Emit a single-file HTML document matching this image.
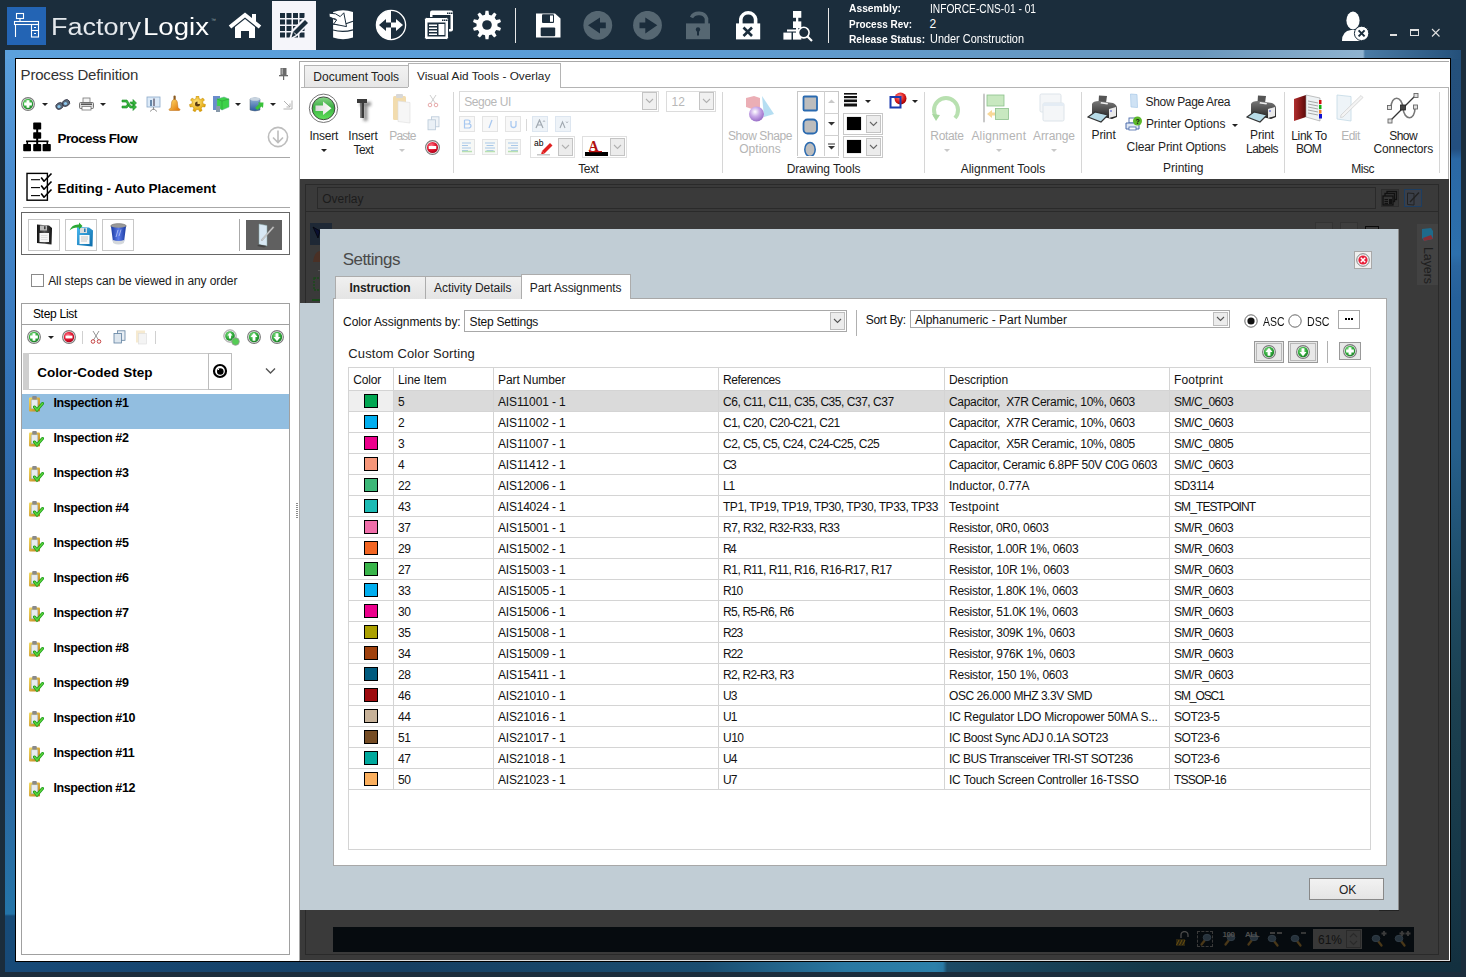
<!DOCTYPE html>
<html><head><meta charset="utf-8"><style>
html,body{margin:0;padding:0;}
body{width:1466px;height:977px;overflow:hidden;position:relative;background:#1b2d3c;font-family:"Liberation Sans",sans-serif;}
body div{position:absolute;box-sizing:border-box;}
.t{line-height:1;white-space:pre;}
</style></head><body>
<div style="left:0px;top:0px;width:1466px;height:50px;background:#1b2d3c"></div><div style="left:5px;top:50px;width:1456px;height:922px;background:linear-gradient(180deg,#5ca1dd 0px,#4a8dd0 120px,#3474b8 330px,#2a62a0 510px,#2a5f98 620px,#2a6aa2 760px,#2474a8 860px,#2474a8 864px,#174b78 866px,#174a78 922px)"></div><div style="left:5px;top:50px;width:1456px;height:9px;background:linear-gradient(90deg,#5ca1dd 0px,#5a9cd6 600px,#6a97bc 1195px,#8fb3d0 1357px,#8fb3d0 1358px,#4a7ba5 1360px,#24507a 1456px)"></div><div style="left:1451px;top:59px;width:10px;height:913px;background:linear-gradient(180deg,#24507a 0px,#234f80 90px,#2a68a5 100px,#2c70ad 195px,#2a66a0 207px,#25609a 240px,#255f8c 390px,#1d4a62 540px,#1b4050 640px,#163848 800px,#13303f 913px)"></div><div style="left:1449px;top:179px;width:1px;height:782px;background:#b0b0b0"></div><div style="left:5px;top:962px;width:1456px;height:10px;background:linear-gradient(90deg,#174a78 0px,#163f62 400px,#1a4d70 700px,#2a78a2 840px,#2c80aa 930px,#2a7aa5 938px,#1c4a65 942px,#153848 1150px,#13303f 1456px)"></div><div style="left:15px;top:58px;width:1436px;height:904px;background:#000"></div><div style="left:16px;top:59px;width:1434px;height:902px;background:#fff"></div><div class="t" style="left:20.6px;top:67.3px;font-size:15px;font-weight:400;color:#333;letter-spacing:-0.188px;">Process Definition</div><div style="left:299px;top:61px;width:1px;height:900px;background:#a8a8a8"></div><div style="left:23px;top:157px;width:267px;height:1px;background:#a8a8a8"></div><div class="t" style="left:57.5px;top:131.57px;font-size:13.5px;font-weight:700;color:#000;letter-spacing:-0.615px;">Process Flow</div><div style="left:23px;top:207px;width:267px;height:1px;background:#a8a8a8"></div><div class="t" style="left:57.3px;top:181.77px;font-size:13.5px;font-weight:700;color:#000;letter-spacing:-0.027px;">Editing - Auto Placement</div><div style="left:21px;top:212px;width:269px;height:43px;border:1px solid #666"></div><div style="left:28px;top:219px;width:32px;height:32px;border:1px solid #c8c8c8"></div><div style="left:65px;top:219px;width:32px;height:32px;border:1px solid #c8c8c8"></div><div style="left:102px;top:219px;width:32px;height:32px;border:1px solid #c8c8c8"></div><div style="left:239px;top:219px;width:1px;height:32px;background:#aaa"></div><div style="left:246px;top:220px;width:36px;height:30px;background:#606060"></div><div style="left:31px;top:274px;width:13px;height:13px;border:1px solid #8a8a8a;background:#fff"></div><div class="t" style="left:48.2px;top:274.54px;font-size:12px;font-weight:400;color:#1a1a1a;letter-spacing:-0.082px;">All steps can be viewed in any order</div><div style="left:21px;top:303px;width:269px;height:652px;border:1px solid #a0a0a0"></div><div style="left:22px;top:324px;width:267px;height:1px;background:#a0a0a0"></div><div class="t" style="left:32.9px;top:308.44px;font-size:12px;font-weight:400;color:#000;letter-spacing:-0.284px;">Step List</div><div style="left:23px;top:353px;width:209px;height:37px;border:1px solid #c8c8c8;background:#fff"></div><div style="left:23px;top:353px;width:6px;height:37px;background:#cfcfcf"></div><div style="left:208px;top:353px;width:24px;height:37px;border:1px solid #bdbdbd"></div><div class="t" style="left:37.2px;top:365.57px;font-size:13.5px;font-weight:700;color:#000;letter-spacing:0.041px;">Color-Coded Step</div><div style="left:22px;top:394px;width:267px;height:35px;background:#92bee0"></div><div class="t" style="left:53.4px;top:397.22px;font-size:12.5px;font-weight:700;color:#000;letter-spacing:-0.366px;">Inspection #1</div><div class="t" style="left:53.4px;top:432.22px;font-size:12.5px;font-weight:700;color:#000;letter-spacing:-0.366px;">Inspection #2</div><div class="t" style="left:53.4px;top:467.22px;font-size:12.5px;font-weight:700;color:#000;letter-spacing:-0.366px;">Inspection #3</div><div class="t" style="left:53.4px;top:502.22px;font-size:12.5px;font-weight:700;color:#000;letter-spacing:-0.366px;">Inspection #4</div><div class="t" style="left:53.4px;top:537.22px;font-size:12.5px;font-weight:700;color:#000;letter-spacing:-0.366px;">Inspection #5</div><div class="t" style="left:53.4px;top:572.22px;font-size:12.5px;font-weight:700;color:#000;letter-spacing:-0.366px;">Inspection #6</div><div class="t" style="left:53.4px;top:607.22px;font-size:12.5px;font-weight:700;color:#000;letter-spacing:-0.366px;">Inspection #7</div><div class="t" style="left:53.4px;top:642.22px;font-size:12.5px;font-weight:700;color:#000;letter-spacing:-0.366px;">Inspection #8</div><div class="t" style="left:53.4px;top:677.22px;font-size:12.5px;font-weight:700;color:#000;letter-spacing:-0.366px;">Inspection #9</div><div class="t" style="left:53.4px;top:712.22px;font-size:12.5px;font-weight:700;color:#000;letter-spacing:-0.367px;">Inspection #10</div><div class="t" style="left:53.4px;top:747.22px;font-size:12.5px;font-weight:700;color:#000;letter-spacing:-0.365px;">Inspection #11</div><div class="t" style="left:53.4px;top:782.22px;font-size:12.5px;font-weight:700;color:#000;letter-spacing:-0.367px;">Inspection #12</div><div style="left:299px;top:61px;width:1150px;height:1px;background:#a8a8a8"></div><div style="left:299px;top:61px;width:1px;height:118px;background:#a8a8a8"></div><div style="left:304px;top:65px;width:105px;height:23px;background:linear-gradient(#f2f2f2,#e6e6e6);border:1px solid #b4b4b4;border-bottom:none"></div><div class="t" style="left:313.3px;top:70.54px;font-size:12px;font-weight:400;color:#222;">Document Tools</div><div style="left:408px;top:63px;width:153px;height:25px;background:#fff;border:1px solid #b4b4b4;border-bottom:none"></div><div class="t" style="left:417px;top:70.71px;font-size:11.8px;font-weight:400;color:#222;">Visual Aid Tools - Overlay</div><div style="left:301px;top:87px;width:1148px;height:1px;background:#b4b4b4"></div><div style="left:408px;top:87px;width:152px;height:1px;background:#fff"></div><div style="left:1448px;top:87px;width:1px;height:92px;background:#b4b4b4"></div><div style="left:300px;top:179px;width:1149px;height:782px;background:#3a3a3a"></div><div style="left:305px;top:184px;width:1134px;height:771px;border:1px solid #2a2a2a"></div><div style="left:317px;top:187px;width:1059px;height:22px;border:1px solid #2a2a2a"></div><div class="t" style="left:322.2px;top:192.64px;font-size:12px;font-weight:400;color:#1c1c1c;">Overlay</div><div style="left:306px;top:211px;width:1132px;height:1px;background:#2a2a2a"></div><div style="left:300px;top:960px;width:1150px;height:1px;background:#ddd"></div><div style="left:333px;top:927px;width:1081px;height:25px;background:#060b0f"></div><div style="left:7px;top:7px;width:39px;height:38px;background:#2364b4"></div><svg style="position:absolute;left:7px;top:7px" width="39" height="38" viewBox="0 0 39 38"><g fill="none" stroke="#fff" stroke-width="1.1">
<rect x="9.5" y="6.5" width="7" height="5"/><line x1="13" y1="11.5" x2="13" y2="14"/>
<rect x="7.5" y="14.5" width="24" height="3"/>
<line x1="8.5" y1="17.5" x2="8.5" y2="30"/><rect x="24.5" y="17.5" width="7" height="12.5"/>
<line x1="24.5" y1="23.5" x2="31.5" y2="23.5"/><line x1="27" y1="20.5" x2="29" y2="20.5"/><line x1="27" y1="26.5" x2="29" y2="26.5"/></g></svg><div class="t" style="left:50.5px;top:15.73px;font-size:23px;font-weight:400;color:#e4e8ec;transform-origin:0 0;transform:scaleX(1.1736);">Factory</div><div class="t" style="left:143px;top:15.73px;font-size:23px;font-weight:400;color:#ffffff;transform-origin:0 0;transform:scaleX(1.2000);">Logix</div><div class="t" style="left:211px;top:17.77px;font-size:5px;font-weight:400;color:#9aa;">™</div><svg style="position:absolute;left:228px;top:12px" width="34" height="28" viewBox="0 0 34 28"><path d="M2 15 L17 3 L32 15" fill="none" stroke="#fff" stroke-width="4" stroke-linejoin="miter"/>
<rect x="24" y="2" width="4" height="8" fill="#fff"/>
<path d="M7 15 L17 7 L27 15 L27 26 L21 26 L21 19 L13 19 L13 26 L7 26 Z" fill="#fff"/></svg><div style="left:272px;top:1px;width:44px;height:49px;background:#f5f5fa"></div><svg style="position:absolute;left:279px;top:12px" width="30" height="27" viewBox="0 0 30 27"><rect x="1.0" y="1.0" width="5" height="5" fill="#1b2d3c"/><rect x="7.5" y="1.0" width="5" height="5" fill="#1b2d3c"/><rect x="14.0" y="1.0" width="5" height="5" fill="#1b2d3c"/><rect x="20.5" y="1.0" width="5" height="5" fill="#1b2d3c"/><rect x="1.0" y="7.5" width="5" height="5" fill="#1b2d3c"/><rect x="7.5" y="7.5" width="5" height="5" fill="#1b2d3c"/><rect x="14.0" y="7.5" width="5" height="5" fill="#1b2d3c"/><rect x="20.5" y="7.5" width="5" height="5" fill="#1b2d3c"/><rect x="1.0" y="14.0" width="5" height="5" fill="#1b2d3c"/><rect x="7.5" y="14.0" width="5" height="5" fill="#1b2d3c"/><rect x="14.0" y="14.0" width="5" height="5" fill="#1b2d3c"/><rect x="20.5" y="14.0" width="5" height="5" fill="#1b2d3c"/><rect x="1.0" y="20.5" width="5" height="5" fill="#1b2d3c"/><rect x="7.5" y="20.5" width="5" height="5" fill="#1b2d3c"/><rect x="14.0" y="20.5" width="5" height="5" fill="#1b2d3c"/><rect x="20.5" y="20.5" width="5" height="5" fill="#1b2d3c"/><path d="M12 26 L14 19 L26 7 L29.5 10.5 L17.5 22.5 Z" fill="#f5f5fa" stroke="#f5f5fa" stroke-width="3"/>
<path d="M12.5 25.5 L14 20 L26 8 L29 11 L17 23 Z" fill="#1b2d3c"/><path d="M15 20.5 L17.5 23" stroke="#f5f5fa" stroke-width="1"/></svg><svg style="position:absolute;left:325px;top:6px" width="33" height="36" viewBox="0 0 33 36"><path d="M8.1 6 Q18 2.5 28 6 L28 31.5 Q18 35 8.1 31.5 Z" fill="#fff"/>
<path d="M8 18.3 Q18 20 28 15.3" fill="none" stroke="#1b2d3c" stroke-width="1.1"/>
<path d="M8 24 Q18 27 28 23.8" fill="none" stroke="#1b2d3c" stroke-width="1.3"/>
<path d="M4 7.2 L10.5 7.8 L15.2 10.6 L18.8 6.8 L21.5 20.6 L8.6 18 L11.5 14.2 L8.5 12.8 L4.2 10.8 Z" fill="#fff" stroke="#1b2d3c" stroke-width="1" stroke-linejoin="miter"/>
<path d="M8.2 12.5 Q10.5 12.5 11.8 14" fill="none" stroke="#1b2d3c" stroke-width="0.9"/></svg><svg style="position:absolute;left:375px;top:9px" width="32" height="32" viewBox="0 0 32 32"><circle cx="16" cy="16" r="14.6" fill="#1b2d3c" stroke="#fff" stroke-width="1.3"/>
<path d="M16 1.4 A14.6 14.6 0 0 0 16 30.6 Z" fill="#fff"/>
<path d="M4 16 L11 10 L11 13.5 L16 13.5 L16 18.5 L11 18.5 L11 22 Z" fill="#1b2d3c"/>
<path d="M28 16 L21 10 L21 13.5 L16 13.5 L16 18.5 L21 18.5 L21 22 Z" fill="#fff"/></svg><svg style="position:absolute;left:423px;top:9px" width="33" height="32" viewBox="0 0 33 32"><rect x="7" y="1.5" width="23" height="21" rx="2" fill="#fff"/>
<rect x="9.5" y="6" width="18" height="14" fill="#1b2d3c"/>
<rect x="1.5" y="8.5" width="24" height="22" rx="2" fill="#fff" stroke="#1b2d3c" stroke-width="1"/>
<rect x="4.5" y="13.5" width="18" height="14" fill="#1b2d3c"/>
<g fill="#fff"><rect x="6" y="15.5" width="8" height="1.5"/><rect x="6" y="18.5" width="8" height="1.5"/><rect x="6" y="21.5" width="8" height="1.5"/><rect x="6" y="24.5" width="8" height="1.5"/><rect x="15.5" y="15" width="6" height="11"/></g>
<g fill="#1b2d3c"><rect x="19" y="10.5" width="1.5" height="1.5"/><rect x="21" y="10.5" width="1.5" height="1.5"/><rect x="23" y="10.5" width="1.5" height="1.5"/>
<rect x="24" y="3.5" width="1.5" height="1.5"/><rect x="26" y="3.5" width="1.5" height="1.5"/><rect x="28" y="3.5" width="1.5" height="1.5"/></g></svg><svg style="position:absolute;left:472px;top:10px" width="30" height="30" viewBox="0 0 30 30"><polygon points="13.00,4.69 13.51,0.78 16.49,0.78 17.00,4.69 19.44,5.48 22.15,2.62 24.57,4.37 22.68,7.84 24.18,9.91 28.06,9.18 28.99,12.03 25.42,13.72 25.42,16.28 28.99,17.97 28.06,20.82 24.18,20.09 22.68,22.16 24.57,25.63 22.15,27.38 19.44,24.52 17.00,25.31 16.49,29.22 13.51,29.22 13.00,25.31 10.56,24.52 7.85,27.38 5.43,25.63 7.32,22.16 5.82,20.09 1.94,20.82 1.01,17.97 4.58,16.28 4.58,13.72 1.01,12.03 1.94,9.18 5.82,9.91 7.32,7.84 5.43,4.37 7.85,2.62 10.56,5.48" fill="#fff"/><circle cx="15" cy="15" r="4.8" fill="#1b2d3c"/></svg><div style="left:515px;top:8px;width:1px;height:35px;background:#e8e8e8"></div><svg style="position:absolute;left:535px;top:13px" width="26" height="25" viewBox="0 0 26 25"><path d="M1 0.5 L20 0.5 L25.5 5.5 L25.5 24.5 L1 24.5 Z" fill="#fff"/>
<rect x="7" y="1.3" width="12" height="8.8" rx="1" fill="#1b2d3c"/><rect x="15" y="2.5" width="3" height="6.3" fill="#fff"/>
<rect x="5.7" y="14.4" width="14.5" height="8.9" rx="1" fill="#1b2d3c"/></svg><svg style="position:absolute;left:583px;top:11px" width="30" height="30" viewBox="0 0 30 30"><circle cx="14.8" cy="14.3" r="14.4" fill="#566772"/>
<path d="M5 14.3 L17 6.6 L17 11.5 L22.8 11.5 L22.8 17.3 L17 17.3 L17 22.5 Z" fill="#1b2d3c"/></svg><svg style="position:absolute;left:633px;top:11px" width="30" height="30" viewBox="0 0 30 30"><circle cx="14.5" cy="14.3" r="14.4" fill="#566772"/>
<path d="M24.3 14.3 L12.3 6.6 L12.3 11.5 L6.5 11.5 L6.5 17.3 L12.3 17.3 L12.3 22.5 Z" fill="#1b2d3c"/></svg><svg style="position:absolute;left:685px;top:10px" width="27" height="31" viewBox="0 0 27 31"><path d="M6.5 7.5 A8 7 0 0 1 21.5 8.5 L21.5 14" fill="none" stroke="#566772" stroke-width="3.6"/>
<rect x="1" y="13.4" width="24" height="15.8" fill="#566772"/>
<circle cx="13" cy="19.5" r="2.2" fill="#1b2d3c"/><rect x="12" y="20" width="2" height="5.5" fill="#1b2d3c"/></svg><svg style="position:absolute;left:735px;top:10px" width="27" height="31" viewBox="0 0 27 31"><path d="M5.8 14 L5.8 9 A7.5 7.5 0 0 1 20.6 9 L20.6 14" fill="none" stroke="#fff" stroke-width="3.6"/>
<rect x="1" y="13.4" width="24.2" height="16" fill="#fff"/>
<path d="M8.5 17.5 L17 26 M17 17.5 L8.5 26" stroke="#1b2d3c" stroke-width="2.6"/></svg><svg style="position:absolute;left:782px;top:10px" width="32" height="32" viewBox="0 0 32 32"><g fill="#fff"><rect x="11" y="1" width="8.3" height="6.8"/><rect x="11" y="11.4" width="8.3" height="6.6"/><rect x="14" y="7" width="2.3" height="5"/>
<rect x="1.4" y="22.6" width="8.1" height="7"/><rect x="11" y="22.6" width="8.3" height="7"/><rect x="14" y="17.5" width="2.3" height="6"/><rect x="5" y="19.5" width="12" height="2"/></g>
<circle cx="21.8" cy="22.6" r="5.3" fill="#1b2d3c" stroke="#fff" stroke-width="1.6"/><line x1="25.5" y1="26.5" x2="30" y2="31" stroke="#fff" stroke-width="2.2"/></svg><div style="left:828px;top:8px;width:1px;height:35px;background:#e8e8e8"></div><div class="t" style="left:849.3px;top:3.27px;font-size:11.5px;font-weight:700;color:#fff;transform-origin:0 0;transform:scaleX(0.8944);">Assembly:</div><div class="t" style="left:849.3px;top:18.87px;font-size:11.5px;font-weight:700;color:#fff;transform-origin:0 0;transform:scaleX(0.8649);">Process Rev:</div><div class="t" style="left:849.3px;top:33.87px;font-size:11.5px;font-weight:700;color:#fff;transform-origin:0 0;transform:scaleX(0.8878);">Release Status:</div><div class="t" style="left:929.6px;top:2.84px;font-size:12px;font-weight:400;color:#fff;transform-origin:0 0;transform:scaleX(0.8501);">INFORCE-CNS-01 - 01</div><div class="t" style="left:929.6px;top:18.44px;font-size:12px;font-weight:400;color:#fff;">2</div><div class="t" style="left:929.6px;top:33.44px;font-size:12px;font-weight:400;color:#fff;transform-origin:0 0;transform:scaleX(0.9093);">Under Construction</div><svg style="position:absolute;left:1340px;top:11px" width="32" height="32" viewBox="0 0 32 32"><ellipse cx="13" cy="9.5" rx="6.6" ry="9" fill="#fff"/>
<path d="M2 30 Q2 20 11 19 L15 19 Q21 20 22 26 L22 30 Z" fill="#fff"/>
<circle cx="21.6" cy="22.4" r="7.2" fill="#fff" stroke="#1b2d3c" stroke-width="1"/>
<path d="M18.6 19.4 L24.6 25.4 M24.6 19.4 L18.6 25.4" stroke="#1b2d3c" stroke-width="2"/></svg><div style="left:1390px;top:34px;width:7px;height:2px;background:#e0e0e0"></div><div style="left:1410px;top:29px;width:9px;height:7px;border:1px solid #e0e0e0;border-top:2px solid #e0e0e0"></div><svg style="position:absolute;left:1431px;top:28px" width="10" height="10" viewBox="0 0 10 10"><path d="M1 1 L8.5 8.5 M8.5 1 L1 8.5" stroke="#e0e0e0" stroke-width="1.1"/></svg><svg style="position:absolute;left:278px;top:67px" width="12" height="14" viewBox="0 0 12 14"><rect x="2.5" y="1" width="6" height="7" fill="#6a6a6a"/><rect x="3.5" y="1.5" width="1.5" height="6" fill="#a8a8a8"/><rect x="1" y="8" width="9" height="1.3" fill="#6a6a6a"/><rect x="5" y="9" width="1.2" height="4" fill="#6a6a6a"/></svg><svg style="position:absolute;left:21px;top:97px" width="14" height="14" viewBox="0 0 14 14"><defs>
<radialGradient id="gg" cx="40%" cy="35%" r="70%"><stop offset="0" stop-color="#8be08b"/><stop offset="0.6" stop-color="#2faa3a"/><stop offset="1" stop-color="#1a7a25"/></radialGradient>
<radialGradient id="rg" cx="40%" cy="35%" r="70%"><stop offset="0" stop-color="#ff8090"/><stop offset="0.6" stop-color="#e0102a"/><stop offset="1" stop-color="#a00018"/></radialGradient>
<linearGradient id="tan" x1="0" y1="0" x2="1" y2="1"><stop offset="0" stop-color="#f8e070"/><stop offset="1" stop-color="#b87818"/></linearGradient>
</defs><circle cx="7.0" cy="7.0" r="6.4" fill="#f4f4f4" stroke="#7a7a7a" stroke-width="1.1"/><circle cx="7.0" cy="7.0" r="5.18" fill="url(#gg)"/><path d="M7.0 3.15 V10.85 M3.15 7.0 H10.85" stroke="#fff" stroke-width="2.80"/></svg><svg style="position:absolute;left:42px;top:103px" width="6" height="3" viewBox="0 0 6 3"><path d="M0 0 H6 L3.0 3 Z" fill="#222"/></svg><svg style="position:absolute;left:55px;top:97px" width="16" height="13" viewBox="0 0 16 13"><g fill="#5a6a7a" stroke="#334" stroke-width="0.8"><ellipse cx="4.5" cy="9" rx="3.8" ry="3.2" transform="rotate(-30 4.5 9)"/><ellipse cx="11" cy="6" rx="3.8" ry="3.2" transform="rotate(-30 11 6)"/></g><g fill="#8cc8f0"><circle cx="4" cy="9.5" r="1.6"/><circle cx="10.5" cy="6.5" r="1.6"/></g></svg><svg style="position:absolute;left:79px;top:97px" width="15" height="14" viewBox="0 0 15 14"><rect x="4" y="1" width="7" height="5" fill="#f4f4f4" stroke="#777" stroke-width="0.8"/><rect x="0.5" y="5.5" width="14" height="6" rx="1" fill="#ddd" stroke="#666" stroke-width="0.9"/><rect x="3" y="9.5" width="9" height="3.5" fill="#fff" stroke="#777" stroke-width="0.8"/><rect x="2" y="6.5" width="11" height="1.5" fill="#555"/></svg><svg style="position:absolute;left:100px;top:103px" width="6" height="3" viewBox="0 0 6 3"><path d="M0 0 H6 L3.0 3 Z" fill="#222"/></svg><svg style="position:absolute;left:121px;top:97px" width="16" height="14" viewBox="0 0 16 14"><path d="M1 3 H6 L10 9 H12 V6.5 L15.5 10 L12 13.5 V11 H9 L5 5 H1 Z M1 9 H5 L6.5 7 L7.7 9 L6 11 H1 Z M9 5 H12 V2.5 L15.5 6 L12 9.5 V7 H10 Z" fill="#36b63e" stroke="#1a8a22" stroke-width="0.6"/></svg><svg style="position:absolute;left:146px;top:96px" width="15" height="16" viewBox="0 0 15 16"><rect x="1" y="1" width="13" height="10" fill="#dceaf8" stroke="#8aa8c8" stroke-width="0.8"/><rect x="4" y="4" width="2" height="6" fill="#6688aa"/><rect x="7" y="2.5" width="2" height="7.5" fill="#889"/><path d="M7.5 11 V14 M7.5 12.5 L4 15.5 M7.5 12.5 L11 15.5" stroke="#888" stroke-width="0.9"/></svg><svg style="position:absolute;left:168px;top:95px" width="13" height="17" viewBox="0 0 13 17"><defs><linearGradient id="bell" x1="0" y1="0" x2="1" y2="1"><stop offset="0" stop-color="#ffe070"/><stop offset="1" stop-color="#e07000"/></linearGradient></defs><rect x="5.5" y="0.5" width="2.2" height="5" rx="1.1" fill="#8a5a20"/><path d="M6.5 4.5 Q3.5 4.5 3.5 9 L3 12.5 L1 14.5 Q1 15.5 2 15.5 H11 Q12 15.5 12 14.5 L10 12.5 L9.5 9 Q9.5 4.5 6.5 4.5 Z" fill="url(#bell)" stroke="#b86a10" stroke-width="0.5"/></svg><svg style="position:absolute;left:189px;top:96px" width="17" height="16" viewBox="0 0 17 16"><defs><radialGradient id="yg" cx="45%" cy="40%" r="60%"><stop offset="0" stop-color="#ffe680"/><stop offset="1" stop-color="#e0a000"/></radialGradient></defs><polygon points="6.96,2.62 7.25,0.10 9.75,0.10 10.04,2.62 11.75,3.44 13.90,2.10 15.46,4.05 13.67,5.85 14.09,7.69 16.48,8.54 15.92,10.98 13.40,10.70 12.23,12.18 13.06,14.58 10.80,15.66 9.44,13.52 7.56,13.52 6.20,15.66 3.94,14.58 4.77,12.18 3.60,10.70 1.08,10.98 0.52,8.54 2.91,7.69 3.33,5.85 1.54,4.05 3.10,2.10 5.25,3.44" fill="url(#yg)" stroke="#c08800" stroke-width="0.5"/><path d="M8.5 5.5 A2.5 2.5 0 1 0 11 8 L8.5 8 Z" fill="#5a3a10"/></svg><svg style="position:absolute;left:212px;top:95px" width="18" height="18" viewBox="0 0 18 18"><rect x="1" y="1" width="7" height="14" fill="#6a8ccc"/><path d="M5 4 L12 2 L17 4 V12 L10 15 L5 12 Z" fill="#3cd24a" stroke="#6a9" stroke-width="0.5"/><path d="M5 4 L10 6 L17 4 M10 6 V15" stroke="#2a9a34" stroke-width="0.6" fill="none"/><rect x="4" y="11" width="4" height="6" fill="#8899aa"/></svg><svg style="position:absolute;left:235px;top:103px" width="6" height="3" viewBox="0 0 6 3"><path d="M0 0 H6 L3.0 3 Z" fill="#222"/></svg><svg style="position:absolute;left:249px;top:96px" width="16" height="16" viewBox="0 0 16 16"><defs><linearGradient id="db" x1="0" y1="0" x2="0" y2="1"><stop offset="0" stop-color="#9ab8d8"/><stop offset="1" stop-color="#2a5aa0"/></linearGradient></defs><path d="M1 3 Q6 0.5 11 3 V14 Q6 16 1 14 Z" fill="url(#db)" stroke="#567" stroke-width="0.5"/><ellipse cx="6" cy="3" rx="5" ry="1.8" fill="#c8d4e0"/><path d="M6 12 L10 8 L9 6.5 L14.5 6.5 L14 12 L12.5 10.5 L8.5 14 Z" fill="#3ac23a"/></svg><svg style="position:absolute;left:270px;top:103px" width="6" height="3" viewBox="0 0 6 3"><path d="M0 0 H6 L3.0 3 Z" fill="#222"/></svg><svg style="position:absolute;left:282px;top:99px" width="11" height="11" viewBox="0 0 11 11"><path d="M1.5 10 H10 V1.5" fill="none" stroke="#aaa" stroke-width="0.9"/><path d="M2 2 L8 8 M8 4.5 V8 H4.5" fill="none" stroke="#aaa" stroke-width="0.9"/></svg><svg style="position:absolute;left:22px;top:121px" width="30" height="32" viewBox="0 0 30 32"><g fill="#000"><rect x="11.2" y="1.6" width="8" height="7" rx="0.8"/><rect x="11.2" y="11.2" width="8" height="6.6" rx="0.8"/><rect x="14.2" y="8" width="2" height="4"/><rect x="14.2" y="17" width="2" height="6"/><rect x="4" y="19.5" width="22.5" height="1.6"/><rect x="4.5" y="20" width="1.6" height="4"/><rect x="24.5" y="20" width="1.6" height="4"/><rect x="1.2" y="23" width="7.8" height="7.3" rx="0.8"/><rect x="11.2" y="23" width="8" height="7.3" rx="0.8"/><rect x="20.6" y="23" width="8.2" height="7.3" rx="0.8"/></g></svg><svg style="position:absolute;left:267px;top:126px" width="22" height="22" viewBox="0 0 22 22"><circle cx="11" cy="11" r="9.6" fill="none" stroke="#bdbdbd" stroke-width="1.6"/><path d="M11 4.5 V16.5 M6 11.5 L11 16.5 L16 11.5" fill="none" stroke="#bdbdbd" stroke-width="1.6"/></svg><svg style="position:absolute;left:22px;top:168px" width="34" height="38" viewBox="0 0 34 38"><rect x="5" y="5.4" width="20.4" height="26.8" fill="#fff" stroke="#000" stroke-width="1.4"/><g stroke="#000" stroke-width="1.1"><path d="M9 11.7 H18"/><path d="M9 19.6 H18"/><path d="M9 27.6 H18"/></g><g fill="none" stroke="#000" stroke-linejoin="round"><path d="M19.2 9.5 L22 13.2 L29.5 5.5" stroke-width="1.6"/><path d="M19.2 17.5 L22 21.2 L29.5 13.5" stroke-width="1.6"/><path d="M19.2 25.5 L22 29.2 L29.5 21.5" stroke-width="1.6"/></g></svg><svg style="position:absolute;left:35px;top:223px" width="18" height="23" viewBox="0 0 18 23"><defs><linearGradient id="fl" x1="0" y1="0" x2="1" y2="0"><stop offset="0" stop-color="#111"/><stop offset="0.5" stop-color="#555"/><stop offset="1" stop-color="#111"/></linearGradient></defs><path d="M2 1.5 L14 2.5 L17 5 L16.5 21.5 L2 20 Z" fill="url(#fl)"/><rect x="5" y="2.5" width="7" height="5" fill="#bbb"/><rect x="9" y="3.2" width="1.6" height="3" fill="#444"/><rect x="4.5" y="10" width="9.5" height="9" fill="#f4f4f4"/><path d="M6 12.5 H12.5 M6 14.5 H12.5 M6 16.5 H12.5" stroke="#ccc" stroke-width="0.6"/></svg><svg style="position:absolute;left:68px;top:222px" width="27" height="26" viewBox="0 0 27 26"><defs><linearGradient id="fb" x1="0" y1="0" x2="1" y2="1"><stop offset="0" stop-color="#4ab8f0"/><stop offset="1" stop-color="#0a6aa8"/></linearGradient></defs><path d="M9 5 L21 5.5 L25 8.5 L24.5 24.5 L9 23 Z" fill="url(#fb)"/><rect x="12" y="6" width="7" height="5" fill="#ddd"/><rect x="16" y="6.5" width="1.6" height="3.5" fill="#2a7ab0"/><rect x="11.5" y="13" width="10" height="9" fill="#fafafa"/><path d="M13 15 H20 M13 17 H20 M13 19 H19" stroke="#aaa" stroke-width="0.6"/><path d="M1.5 8.5 Q4 2 11 2.5 L11 0.5 L14.5 4 L11 7.5 L11 5.5 Q5 5 1.5 8.5 Z" fill="#2aa834"/></svg><svg style="position:absolute;left:110px;top:223px" width="17" height="23" viewBox="0 0 17 23"><defs><linearGradient id="tr" x1="0" y1="0" x2="1" y2="0"><stop offset="0" stop-color="#1a3aa0"/><stop offset="0.5" stop-color="#5a7ae8"/><stop offset="1" stop-color="#1a3aa0"/></linearGradient></defs><ellipse cx="8.5" cy="3" rx="7.8" ry="2.4" fill="#999" stroke="#777" stroke-width="0.6"/><path d="M1 3.5 L3 19 Q8.5 22 14 19 L16 3.5 Q8.5 6 1 3.5 Z" fill="url(#tr)"/><path d="M3 17 Q8.5 19 14 17 L14 20 Q8.5 23 3 20 Z" fill="#d4d8dc"/><path d="M8 7 L6 14 M11 6.5 L9 13" stroke="#b8c8f8" stroke-width="0.8"/></svg><svg style="position:absolute;left:247px;top:221px" width="34" height="28" viewBox="0 0 34 28"><path d="M12 3 L20 4.5 L20 25 L12 23.5 Z" fill="#d8e8f4" stroke="#8aa" stroke-width="0.5"/><path d="M12 23.5 L20 25 L17 26.5 L10 25 Z" fill="#444"/><path d="M14 19 L26 5.5 L27 6.5 L15 20 Z" fill="#ccc" stroke="#999" stroke-width="0.4"/></svg><svg style="position:absolute;left:27px;top:330px" width="14" height="14" viewBox="0 0 14 14"><defs>
<radialGradient id="gg" cx="40%" cy="35%" r="70%"><stop offset="0" stop-color="#8be08b"/><stop offset="0.6" stop-color="#2faa3a"/><stop offset="1" stop-color="#1a7a25"/></radialGradient>
<radialGradient id="rg" cx="40%" cy="35%" r="70%"><stop offset="0" stop-color="#ff8090"/><stop offset="0.6" stop-color="#e0102a"/><stop offset="1" stop-color="#a00018"/></radialGradient>
<linearGradient id="tan" x1="0" y1="0" x2="1" y2="1"><stop offset="0" stop-color="#f8e070"/><stop offset="1" stop-color="#b87818"/></linearGradient>
</defs><circle cx="7.0" cy="7.0" r="6.4" fill="#f4f4f4" stroke="#7a7a7a" stroke-width="1.1"/><circle cx="7.0" cy="7.0" r="5.18" fill="url(#gg)"/><path d="M7.0 3.15 V10.85 M3.15 7.0 H10.85" stroke="#fff" stroke-width="2.80"/></svg><svg style="position:absolute;left:48px;top:336px" width="6" height="3" viewBox="0 0 6 3"><path d="M0 0 H6 L3.0 3 Z" fill="#222"/></svg><svg style="position:absolute;left:62px;top:330px" width="14" height="14" viewBox="0 0 14 14"><defs>
<radialGradient id="gg" cx="40%" cy="35%" r="70%"><stop offset="0" stop-color="#8be08b"/><stop offset="0.6" stop-color="#2faa3a"/><stop offset="1" stop-color="#1a7a25"/></radialGradient>
<radialGradient id="rg" cx="40%" cy="35%" r="70%"><stop offset="0" stop-color="#ff8090"/><stop offset="0.6" stop-color="#e0102a"/><stop offset="1" stop-color="#a00018"/></radialGradient>
<linearGradient id="tan" x1="0" y1="0" x2="1" y2="1"><stop offset="0" stop-color="#f8e070"/><stop offset="1" stop-color="#b87818"/></linearGradient>
</defs><circle cx="7.0" cy="7.0" r="6.4" fill="#f4f4f4" stroke="#7a7a7a" stroke-width="1.1"/><circle cx="7.0" cy="7.0" r="5.18" fill="url(#rg)"/><path d="M3.5 7.0 H10.5" stroke="#fff" stroke-width="2.80"/></svg><div style="left:82px;top:331px;width:1px;height:13px;background:#d0d0d0"></div><svg style="position:absolute;left:90px;top:330px" width="12" height="14" viewBox="0 0 12 14"><path d="M3 1 L8.5 10 M9 1 L3.5 10" stroke="#888" stroke-width="0.9"/><circle cx="3" cy="11.5" r="1.8" fill="none" stroke="#c03030" stroke-width="0.9"/><circle cx="9" cy="11.5" r="1.8" fill="none" stroke="#c03030" stroke-width="0.9"/></svg><svg style="position:absolute;left:113px;top:330px" width="13" height="14" viewBox="0 0 13 14"><rect x="4.5" y="0.8" width="7.5" height="9.5" fill="#e8eef4" stroke="#6080a0" stroke-width="0.8"/><rect x="1" y="3.5" width="7.5" height="9.5" fill="#dde6ee" stroke="#6080a0" stroke-width="0.8"/></svg><svg style="position:absolute;left:135px;top:329px" width="13" height="16" viewBox="0 0 13 16"><rect x="1" y="1.5" width="9" height="12" fill="#f0dcb0" opacity="0.6"/><rect x="3.5" y="4.5" width="8" height="10.5" fill="#f4f4f4" stroke="#ddd" stroke-width="0.6"/></svg><div style="left:155px;top:331px;width:1px;height:13px;background:#d0d0d0"></div><svg style="position:absolute;left:223px;top:329px" width="17" height="17" viewBox="0 0 17 17"><defs>
<radialGradient id="gg" cx="40%" cy="35%" r="70%"><stop offset="0" stop-color="#8be08b"/><stop offset="0.6" stop-color="#2faa3a"/><stop offset="1" stop-color="#1a7a25"/></radialGradient>
<radialGradient id="rg" cx="40%" cy="35%" r="70%"><stop offset="0" stop-color="#ff8090"/><stop offset="0.6" stop-color="#e0102a"/><stop offset="1" stop-color="#a00018"/></radialGradient>
<linearGradient id="tan" x1="0" y1="0" x2="1" y2="1"><stop offset="0" stop-color="#f8e070"/><stop offset="1" stop-color="#b87818"/></linearGradient>
</defs><circle cx="7" cy="7" r="6.2" fill="#eee" stroke="#888" stroke-width="0.8"/><circle cx="7" cy="7" r="4.8" fill="url(#gg)"/><path d="M7 3.5 L9.5 6.5 H8 V9.5 H6 V6.5 H4.5 Z" fill="#fff"/><circle cx="12.5" cy="12.5" r="3.8" fill="#5c5" stroke="#999" stroke-width="0.8"/></svg><svg style="position:absolute;left:247px;top:330px" width="14" height="14" viewBox="0 0 14 14"><defs>
<radialGradient id="gg" cx="40%" cy="35%" r="70%"><stop offset="0" stop-color="#8be08b"/><stop offset="0.6" stop-color="#2faa3a"/><stop offset="1" stop-color="#1a7a25"/></radialGradient>
<radialGradient id="rg" cx="40%" cy="35%" r="70%"><stop offset="0" stop-color="#ff8090"/><stop offset="0.6" stop-color="#e0102a"/><stop offset="1" stop-color="#a00018"/></radialGradient>
<linearGradient id="tan" x1="0" y1="0" x2="1" y2="1"><stop offset="0" stop-color="#f8e070"/><stop offset="1" stop-color="#b87818"/></linearGradient>
</defs><circle cx="7.0" cy="7.0" r="6.4" fill="#f4f4f4" stroke="#7a7a7a" stroke-width="1.1"/><circle cx="7.0" cy="7.0" r="5.18" fill="url(#gg)"/><path d="M7.0 2.8000000000000003 L10.5 7.0 H8.4 V10.85 H5.6000000000000005 V7.0 H3.5 Z" fill="#fff"/></svg><svg style="position:absolute;left:270px;top:330px" width="14" height="14" viewBox="0 0 14 14"><defs>
<radialGradient id="gg" cx="40%" cy="35%" r="70%"><stop offset="0" stop-color="#8be08b"/><stop offset="0.6" stop-color="#2faa3a"/><stop offset="1" stop-color="#1a7a25"/></radialGradient>
<radialGradient id="rg" cx="40%" cy="35%" r="70%"><stop offset="0" stop-color="#ff8090"/><stop offset="0.6" stop-color="#e0102a"/><stop offset="1" stop-color="#a00018"/></radialGradient>
<linearGradient id="tan" x1="0" y1="0" x2="1" y2="1"><stop offset="0" stop-color="#f8e070"/><stop offset="1" stop-color="#b87818"/></linearGradient>
</defs><circle cx="7.0" cy="7.0" r="6.4" fill="#f4f4f4" stroke="#7a7a7a" stroke-width="1.1"/><circle cx="7.0" cy="7.0" r="5.18" fill="url(#gg)"/><path d="M7.0 11.200000000000001 L10.5 7.0 H8.4 V3.15 H5.6000000000000005 V7.0 H3.5 Z" fill="#fff"/></svg><svg style="position:absolute;left:212px;top:363px" width="16" height="16" viewBox="0 0 16 16"><circle cx="8" cy="8" r="6" fill="none" stroke="#000" stroke-width="2.2"/><circle cx="8.3" cy="8.5" r="3.3" fill="#000"/><path d="M5 5 L7 7" stroke="#fff" stroke-width="1"/></svg><svg style="position:absolute;left:265px;top:367px" width="11" height="8" viewBox="0 0 11 8"><path d="M1 1.5 L5.5 6 L10 1.5" fill="none" stroke="#555" stroke-width="1.4"/></svg><svg style="position:absolute;left:28px;top:396px" width="16" height="17" viewBox="0 0 16 17"><defs><linearGradient id="tn0" x1="0" y1="0" x2="1" y2="1"><stop offset="0" stop-color="#f6dc60"/><stop offset="1" stop-color="#b87818"/></linearGradient></defs>
<rect x="1" y="1.5" width="11" height="14" rx="1" fill="url(#tn0)"/><rect x="3.2" y="3.8" width="6.6" height="9" fill="#e8ecf0" stroke="#9aa" stroke-width="0.5"/><rect x="4.2" y="0" width="4.6" height="3.5" rx="1" fill="#8a8a8a"/>
<path d="M6.5 11 L9 14 L14.5 7.5" fill="none" stroke="#1a9a1a" stroke-width="3" stroke-linecap="round"/><path d="M6.5 11 L9 14 L14.5 7.5" fill="none" stroke="#5ad43a" stroke-width="1.5" stroke-linecap="round"/></svg><svg style="position:absolute;left:28px;top:431px" width="16" height="17" viewBox="0 0 16 17"><defs><linearGradient id="tn1" x1="0" y1="0" x2="1" y2="1"><stop offset="0" stop-color="#f6dc60"/><stop offset="1" stop-color="#b87818"/></linearGradient></defs>
<rect x="1" y="1.5" width="11" height="14" rx="1" fill="url(#tn1)"/><rect x="3.2" y="3.8" width="6.6" height="9" fill="#e8ecf0" stroke="#9aa" stroke-width="0.5"/><rect x="4.2" y="0" width="4.6" height="3.5" rx="1" fill="#8a8a8a"/>
<path d="M6.5 11 L9 14 L14.5 7.5" fill="none" stroke="#1a9a1a" stroke-width="3" stroke-linecap="round"/><path d="M6.5 11 L9 14 L14.5 7.5" fill="none" stroke="#5ad43a" stroke-width="1.5" stroke-linecap="round"/></svg><svg style="position:absolute;left:28px;top:466px" width="16" height="17" viewBox="0 0 16 17"><defs><linearGradient id="tn2" x1="0" y1="0" x2="1" y2="1"><stop offset="0" stop-color="#f6dc60"/><stop offset="1" stop-color="#b87818"/></linearGradient></defs>
<rect x="1" y="1.5" width="11" height="14" rx="1" fill="url(#tn2)"/><rect x="3.2" y="3.8" width="6.6" height="9" fill="#e8ecf0" stroke="#9aa" stroke-width="0.5"/><rect x="4.2" y="0" width="4.6" height="3.5" rx="1" fill="#8a8a8a"/>
<path d="M6.5 11 L9 14 L14.5 7.5" fill="none" stroke="#1a9a1a" stroke-width="3" stroke-linecap="round"/><path d="M6.5 11 L9 14 L14.5 7.5" fill="none" stroke="#5ad43a" stroke-width="1.5" stroke-linecap="round"/></svg><svg style="position:absolute;left:28px;top:501px" width="16" height="17" viewBox="0 0 16 17"><defs><linearGradient id="tn3" x1="0" y1="0" x2="1" y2="1"><stop offset="0" stop-color="#f6dc60"/><stop offset="1" stop-color="#b87818"/></linearGradient></defs>
<rect x="1" y="1.5" width="11" height="14" rx="1" fill="url(#tn3)"/><rect x="3.2" y="3.8" width="6.6" height="9" fill="#e8ecf0" stroke="#9aa" stroke-width="0.5"/><rect x="4.2" y="0" width="4.6" height="3.5" rx="1" fill="#8a8a8a"/>
<path d="M6.5 11 L9 14 L14.5 7.5" fill="none" stroke="#1a9a1a" stroke-width="3" stroke-linecap="round"/><path d="M6.5 11 L9 14 L14.5 7.5" fill="none" stroke="#5ad43a" stroke-width="1.5" stroke-linecap="round"/></svg><svg style="position:absolute;left:28px;top:536px" width="16" height="17" viewBox="0 0 16 17"><defs><linearGradient id="tn4" x1="0" y1="0" x2="1" y2="1"><stop offset="0" stop-color="#f6dc60"/><stop offset="1" stop-color="#b87818"/></linearGradient></defs>
<rect x="1" y="1.5" width="11" height="14" rx="1" fill="url(#tn4)"/><rect x="3.2" y="3.8" width="6.6" height="9" fill="#e8ecf0" stroke="#9aa" stroke-width="0.5"/><rect x="4.2" y="0" width="4.6" height="3.5" rx="1" fill="#8a8a8a"/>
<path d="M6.5 11 L9 14 L14.5 7.5" fill="none" stroke="#1a9a1a" stroke-width="3" stroke-linecap="round"/><path d="M6.5 11 L9 14 L14.5 7.5" fill="none" stroke="#5ad43a" stroke-width="1.5" stroke-linecap="round"/></svg><svg style="position:absolute;left:28px;top:571px" width="16" height="17" viewBox="0 0 16 17"><defs><linearGradient id="tn5" x1="0" y1="0" x2="1" y2="1"><stop offset="0" stop-color="#f6dc60"/><stop offset="1" stop-color="#b87818"/></linearGradient></defs>
<rect x="1" y="1.5" width="11" height="14" rx="1" fill="url(#tn5)"/><rect x="3.2" y="3.8" width="6.6" height="9" fill="#e8ecf0" stroke="#9aa" stroke-width="0.5"/><rect x="4.2" y="0" width="4.6" height="3.5" rx="1" fill="#8a8a8a"/>
<path d="M6.5 11 L9 14 L14.5 7.5" fill="none" stroke="#1a9a1a" stroke-width="3" stroke-linecap="round"/><path d="M6.5 11 L9 14 L14.5 7.5" fill="none" stroke="#5ad43a" stroke-width="1.5" stroke-linecap="round"/></svg><svg style="position:absolute;left:28px;top:606px" width="16" height="17" viewBox="0 0 16 17"><defs><linearGradient id="tn6" x1="0" y1="0" x2="1" y2="1"><stop offset="0" stop-color="#f6dc60"/><stop offset="1" stop-color="#b87818"/></linearGradient></defs>
<rect x="1" y="1.5" width="11" height="14" rx="1" fill="url(#tn6)"/><rect x="3.2" y="3.8" width="6.6" height="9" fill="#e8ecf0" stroke="#9aa" stroke-width="0.5"/><rect x="4.2" y="0" width="4.6" height="3.5" rx="1" fill="#8a8a8a"/>
<path d="M6.5 11 L9 14 L14.5 7.5" fill="none" stroke="#1a9a1a" stroke-width="3" stroke-linecap="round"/><path d="M6.5 11 L9 14 L14.5 7.5" fill="none" stroke="#5ad43a" stroke-width="1.5" stroke-linecap="round"/></svg><svg style="position:absolute;left:28px;top:641px" width="16" height="17" viewBox="0 0 16 17"><defs><linearGradient id="tn7" x1="0" y1="0" x2="1" y2="1"><stop offset="0" stop-color="#f6dc60"/><stop offset="1" stop-color="#b87818"/></linearGradient></defs>
<rect x="1" y="1.5" width="11" height="14" rx="1" fill="url(#tn7)"/><rect x="3.2" y="3.8" width="6.6" height="9" fill="#e8ecf0" stroke="#9aa" stroke-width="0.5"/><rect x="4.2" y="0" width="4.6" height="3.5" rx="1" fill="#8a8a8a"/>
<path d="M6.5 11 L9 14 L14.5 7.5" fill="none" stroke="#1a9a1a" stroke-width="3" stroke-linecap="round"/><path d="M6.5 11 L9 14 L14.5 7.5" fill="none" stroke="#5ad43a" stroke-width="1.5" stroke-linecap="round"/></svg><svg style="position:absolute;left:28px;top:676px" width="16" height="17" viewBox="0 0 16 17"><defs><linearGradient id="tn8" x1="0" y1="0" x2="1" y2="1"><stop offset="0" stop-color="#f6dc60"/><stop offset="1" stop-color="#b87818"/></linearGradient></defs>
<rect x="1" y="1.5" width="11" height="14" rx="1" fill="url(#tn8)"/><rect x="3.2" y="3.8" width="6.6" height="9" fill="#e8ecf0" stroke="#9aa" stroke-width="0.5"/><rect x="4.2" y="0" width="4.6" height="3.5" rx="1" fill="#8a8a8a"/>
<path d="M6.5 11 L9 14 L14.5 7.5" fill="none" stroke="#1a9a1a" stroke-width="3" stroke-linecap="round"/><path d="M6.5 11 L9 14 L14.5 7.5" fill="none" stroke="#5ad43a" stroke-width="1.5" stroke-linecap="round"/></svg><svg style="position:absolute;left:28px;top:711px" width="16" height="17" viewBox="0 0 16 17"><defs><linearGradient id="tn9" x1="0" y1="0" x2="1" y2="1"><stop offset="0" stop-color="#f6dc60"/><stop offset="1" stop-color="#b87818"/></linearGradient></defs>
<rect x="1" y="1.5" width="11" height="14" rx="1" fill="url(#tn9)"/><rect x="3.2" y="3.8" width="6.6" height="9" fill="#e8ecf0" stroke="#9aa" stroke-width="0.5"/><rect x="4.2" y="0" width="4.6" height="3.5" rx="1" fill="#8a8a8a"/>
<path d="M6.5 11 L9 14 L14.5 7.5" fill="none" stroke="#1a9a1a" stroke-width="3" stroke-linecap="round"/><path d="M6.5 11 L9 14 L14.5 7.5" fill="none" stroke="#5ad43a" stroke-width="1.5" stroke-linecap="round"/></svg><svg style="position:absolute;left:28px;top:746px" width="16" height="17" viewBox="0 0 16 17"><defs><linearGradient id="tn10" x1="0" y1="0" x2="1" y2="1"><stop offset="0" stop-color="#f6dc60"/><stop offset="1" stop-color="#b87818"/></linearGradient></defs>
<rect x="1" y="1.5" width="11" height="14" rx="1" fill="url(#tn10)"/><rect x="3.2" y="3.8" width="6.6" height="9" fill="#e8ecf0" stroke="#9aa" stroke-width="0.5"/><rect x="4.2" y="0" width="4.6" height="3.5" rx="1" fill="#8a8a8a"/>
<path d="M6.5 11 L9 14 L14.5 7.5" fill="none" stroke="#1a9a1a" stroke-width="3" stroke-linecap="round"/><path d="M6.5 11 L9 14 L14.5 7.5" fill="none" stroke="#5ad43a" stroke-width="1.5" stroke-linecap="round"/></svg><svg style="position:absolute;left:28px;top:781px" width="16" height="17" viewBox="0 0 16 17"><defs><linearGradient id="tn11" x1="0" y1="0" x2="1" y2="1"><stop offset="0" stop-color="#f6dc60"/><stop offset="1" stop-color="#b87818"/></linearGradient></defs>
<rect x="1" y="1.5" width="11" height="14" rx="1" fill="url(#tn11)"/><rect x="3.2" y="3.8" width="6.6" height="9" fill="#e8ecf0" stroke="#9aa" stroke-width="0.5"/><rect x="4.2" y="0" width="4.6" height="3.5" rx="1" fill="#8a8a8a"/>
<path d="M6.5 11 L9 14 L14.5 7.5" fill="none" stroke="#1a9a1a" stroke-width="3" stroke-linecap="round"/><path d="M6.5 11 L9 14 L14.5 7.5" fill="none" stroke="#5ad43a" stroke-width="1.5" stroke-linecap="round"/></svg><div style="left:296px;top:503px;width:2px;height:1px;background:#8a8a8a"></div><div style="left:296px;top:505px;width:2px;height:1px;background:#8a8a8a"></div><div style="left:296px;top:507px;width:2px;height:1px;background:#8a8a8a"></div><div style="left:296px;top:509px;width:2px;height:1px;background:#8a8a8a"></div><div style="left:296px;top:511px;width:2px;height:1px;background:#8a8a8a"></div><div style="left:296px;top:513px;width:2px;height:1px;background:#8a8a8a"></div><div style="left:296px;top:515px;width:2px;height:1px;background:#8a8a8a"></div><div style="left:296px;top:517px;width:2px;height:1px;background:#8a8a8a"></div><div style="left:453px;top:92px;width:1px;height:81px;background:#d6d6d6"></div><div style="left:722px;top:92px;width:1px;height:81px;background:#d6d6d6"></div><div style="left:924px;top:92px;width:1px;height:81px;background:#d6d6d6"></div><div style="left:1081px;top:92px;width:1px;height:81px;background:#d6d6d6"></div><div style="left:1284px;top:92px;width:1px;height:81px;background:#d6d6d6"></div><div style="left:1439px;top:92px;width:1px;height:81px;background:#d6d6d6"></div><svg style="position:absolute;left:308px;top:93px" width="31" height="31" viewBox="0 0 31 31"><defs><linearGradient id="ins" x1="0" y1="0" x2="0" y2="1"><stop offset="0" stop-color="#8ad48a"/><stop offset="0.45" stop-color="#3cb043"/><stop offset="1" stop-color="#5fe05a"/></linearGradient>
<linearGradient id="arw" x1="0" y1="0" x2="1" y2="0"><stop offset="0" stop-color="#d8d8d8"/><stop offset="1" stop-color="#fff"/></linearGradient></defs>
<circle cx="15.5" cy="15.3" r="14.2" fill="#fff" stroke="#777" stroke-width="1"/><circle cx="15.5" cy="15.3" r="11.4" fill="url(#ins)" stroke="#3a3a3a" stroke-width="0.9"/>
<path d="M7.5 12.5 H15 V8.5 L23.5 15.3 L15 22 V18 H7.5 Z" fill="url(#arw)"/></svg><div class="t" style="left:123.80000000000001px;width:400px;text-align:center;top:129.54px;font-size:12px;font-weight:400;color:#1e1e1e;letter-spacing:-0.2px;">Insert</div><svg style="position:absolute;left:321px;top:149px" width="6" height="3" viewBox="0 0 6 3"><path d="M0 0 H6 L3.0 3 Z" fill="#222"/></svg><svg style="position:absolute;left:354px;top:96px" width="22" height="28" viewBox="0 0 22 28"><defs><filter id="sh" x="-50%" y="-50%" width="200%" height="200%"><feGaussianBlur stdDeviation="1.5"/></filter></defs>
<path d="M6 6 H17 V10 H13.5 V25 H9.5 V10 H6 Z" fill="#333" opacity="0.55" filter="url(#sh)"/>
<path d="M3 3 H13 V7 H10 V22 H6.5 V7 H3 Z" fill="#3a3a3a"/><path d="M6.5 7 H7.8 V22 H6.5 Z" fill="#777"/></svg><div class="t" style="left:163px;width:400px;text-align:center;top:129.54px;font-size:12px;font-weight:400;color:#1e1e1e;letter-spacing:-0.1px;">Insert</div><div class="t" style="left:163.39999999999998px;width:400px;text-align:center;top:143.64px;font-size:12px;font-weight:400;color:#1e1e1e;letter-spacing:-0.6px;">Text</div><svg style="position:absolute;left:391px;top:93px" width="22" height="32" viewBox="0 0 22 32"><rect x="2" y="3" width="13" height="24" rx="1.5" fill="#f2dcae"/><rect x="5" y="1" width="7" height="4" rx="1" fill="#d8d8d8"/>
<path d="M7 8 L19 9.5 L19 30 L7 28.5 Z" fill="#f6f6f6" stroke="#ddd" stroke-width="0.6"/></svg><div class="t" style="left:202.39999999999998px;width:400px;text-align:center;top:129.54px;font-size:12px;font-weight:400;color:#b4b4b4;letter-spacing:-0.918px;">Paste</div><svg style="position:absolute;left:399px;top:149px" width="6" height="3" viewBox="0 0 6 3"><path d="M0 0 H6 L3.0 3 Z" fill="#c8c8c8"/></svg><svg style="position:absolute;left:427px;top:94px" width="12" height="14" viewBox="0 0 12 14"><path d="M3 1 L8.5 9.5 M9 1 L3.5 9.5" stroke="#c8c8c8" stroke-width="0.9"/><circle cx="3" cy="11" r="1.8" fill="none" stroke="#e4a0a0" stroke-width="0.9"/><circle cx="9" cy="11" r="1.8" fill="none" stroke="#e4a0a0" stroke-width="0.9"/></svg><svg style="position:absolute;left:427px;top:116px" width="13" height="15" viewBox="0 0 13 15"><rect x="4.5" y="0.8" width="7.5" height="10" fill="#f0f4f8" stroke="#b8c8d8" stroke-width="0.8"/><rect x="1" y="3.8" width="7.5" height="10" fill="#eaf0f6" stroke="#b8c8d8" stroke-width="0.8"/></svg><svg style="position:absolute;left:425px;top:140px" width="15" height="15" viewBox="0 0 15 15"><defs>
<radialGradient id="gg" cx="40%" cy="35%" r="70%"><stop offset="0" stop-color="#8be08b"/><stop offset="0.6" stop-color="#2faa3a"/><stop offset="1" stop-color="#1a7a25"/></radialGradient>
<radialGradient id="rg" cx="40%" cy="35%" r="70%"><stop offset="0" stop-color="#ff8090"/><stop offset="0.6" stop-color="#e0102a"/><stop offset="1" stop-color="#a00018"/></radialGradient>
<linearGradient id="tan" x1="0" y1="0" x2="1" y2="1"><stop offset="0" stop-color="#f8e070"/><stop offset="1" stop-color="#b87818"/></linearGradient>
</defs><circle cx="7.5" cy="7.5" r="6.9" fill="#f4f4f4" stroke="#7a7a7a" stroke-width="1.1"/><circle cx="7.5" cy="7.5" r="5.55" fill="url(#rg)"/><path d="M3.75 7.5 H11.25" stroke="#fff" stroke-width="3.00"/></svg><div style="left:459px;top:91px;width:200px;height:21px;border:1px solid #dcdcdc;background:#fff"></div><div style="left:642px;top:92px;width:15px;height:18px;border:1px solid #c4c4c4;background:#f0f0f0"></div><svg style="position:absolute;left:645px;top:98px" width="9" height="6" viewBox="0 0 9 6"><path d="M1 1 L4.5 4.5 L8 1" fill="none" stroke="#b0b0b0" stroke-width="1.1"/></svg><div class="t" style="left:464.3px;top:96.34px;font-size:12px;font-weight:400;color:#b8b8b8;letter-spacing:-0.431px;">Segoe UI</div><div style="left:666px;top:91px;width:50px;height:21px;border:1px solid #dcdcdc;background:#fff"></div><div style="left:699px;top:92px;width:15px;height:18px;border:1px solid #c4c4c4;background:#f0f0f0"></div><svg style="position:absolute;left:702px;top:98px" width="9" height="6" viewBox="0 0 9 6"><path d="M1 1 L4.5 4.5 L8 1" fill="none" stroke="#b0b0b0" stroke-width="1.1"/></svg><div class="t" style="left:671.5px;top:96.34px;font-size:12px;font-weight:400;color:#b8b8b8;">12</div><div style="left:459px;top:116px;width:16px;height:16px;border:1px solid #e4e4e4;background:#f8f8f8"></div><div style="left:482px;top:116px;width:16px;height:16px;border:1px solid #e4e4e4;background:#f8f8f8"></div><div style="left:505px;top:116px;width:16px;height:16px;border:1px solid #e4e4e4;background:#f8f8f8"></div><div style="left:532px;top:116px;width:16px;height:16px;border:1px solid #dde6f0;background:#eef3f8"></div><div style="left:555px;top:116px;width:16px;height:16px;border:1px solid #dde6f0;background:#eef3f8"></div><svg style="position:absolute;left:463px;top:119px" width="9" height="10" viewBox="0 0 9 10"><path d="M1.5 1 V9 H5.5 Q8 9 8 6.8 Q8 5 5.5 5 H1.5 M1.5 5 H5 Q7 5 7 3 Q7 1 5 1 H1.5" fill="none" stroke="#a8c8f0" stroke-width="1.2"/></svg><svg style="position:absolute;left:486px;top:119px" width="9" height="10" viewBox="0 0 9 10"><path d="M6 1 L3 9" stroke="#a8c8f0" stroke-width="1.3"/></svg><svg style="position:absolute;left:509px;top:119px" width="9" height="10" viewBox="0 0 9 10"><path d="M2 2 V6 Q2 8.5 4.5 8.5 Q7 8.5 7 6 V2" fill="none" stroke="#a8c8f0" stroke-width="1.3"/></svg><div style="left:526px;top:119px;width:1px;height:12px;background:#d8d8d8"></div><svg style="position:absolute;left:535px;top:119px" width="11" height="10" viewBox="0 0 11 10"><path d="M1 9 L4.5 1 L8 9 M2.5 6 H6.5" fill="none" stroke="#a0a8b0" stroke-width="1.2"/><path d="M8 3 L9 1.5 L10 3" fill="none" stroke="#a0a8b0" stroke-width="0.7"/></svg><svg style="position:absolute;left:558px;top:120px" width="11" height="9" viewBox="0 0 11 9"><path d="M2 8 L4.5 2 L7 8" fill="none" stroke="#a0a8b0" stroke-width="1.1"/><path d="M8 1.5 L9 3 L10 1.5" fill="none" stroke="#a0a8b0" stroke-width="0.7"/></svg><div style="left:459px;top:139px;width:16px;height:16px;border:1px solid #e4e4e4;background:#f6f8f6"></div><div style="left:482px;top:139px;width:16px;height:16px;border:1px solid #e4e4e4;background:#f6f8f6"></div><div style="left:505px;top:139px;width:16px;height:16px;border:1px solid #e4e4e4;background:#f6f8f6"></div><svg style="position:absolute;left:461px;top:141px" width="12" height="12" viewBox="0 0 12 12"><path d="M1 2 H10 M1 4.5 H7 M1 7 H10 M1 9.5 H7" stroke="#a8c8e8" stroke-width="1"/><path d="M1 10.5 H11" stroke="#b8e0b0" stroke-width="1.5"/></svg><svg style="position:absolute;left:484px;top:141px" width="12" height="12" viewBox="0 0 12 12"><path d="M1 2 H11 M2.5 4.5 H9.5 M1 7 H11 M2.5 9.5 H9.5" stroke="#a8c8e8" stroke-width="1"/><path d="M1 10.5 H11" stroke="#b8e0b0" stroke-width="1.5"/></svg><svg style="position:absolute;left:507px;top:141px" width="12" height="12" viewBox="0 0 12 12"><path d="M1 2 H11 M4 4.5 H11 M1 7 H11 M4 9.5 H11" stroke="#a8c8e8" stroke-width="1"/><path d="M1 10.5 H11" stroke="#b8e0b0" stroke-width="1.5"/></svg><div style="left:530px;top:136px;width:45px;height:22px;border:1px solid #e0e0e0;background:#fff"></div><div style="left:558px;top:138px;width:15px;height:18px;border:1px solid #c4c4c4;background:#ececec"></div><svg style="position:absolute;left:561px;top:144px" width="9" height="6" viewBox="0 0 9 6"><path d="M1 1 L4.5 4.5 L8 1" fill="none" stroke="#b0b0b0" stroke-width="1.1"/></svg><svg style="position:absolute;left:533px;top:138px" width="22" height="18" viewBox="0 0 22 18"><text x="1" y="8" font-family="Liberation Sans" font-size="8.5" fill="#000">ab</text><path d="M9 13 L17 5 L19.5 7.5 L11.5 15.5 Z" fill="#e02020"/><path d="M9 13 L8 16.5 L11.5 15.5 Z" fill="#e02020"/><rect x="4" y="16" width="13" height="1.5" fill="#c8c8c8"/></svg><div style="left:582px;top:136px;width:45px;height:22px;border:1px solid #e0e0e0;background:#fff"></div><div style="left:610px;top:138px;width:15px;height:18px;border:1px solid #c4c4c4;background:#ececec"></div><svg style="position:absolute;left:613px;top:144px" width="9" height="6" viewBox="0 0 9 6"><path d="M1 1 L4.5 4.5 L8 1" fill="none" stroke="#b0b0b0" stroke-width="1.1"/></svg><svg style="position:absolute;left:583px;top:138px" width="25" height="19" viewBox="0 0 25 19"><text x="5.5" y="12.5" font-family="Liberation Serif" font-size="14" font-weight="bold" fill="#b01010">A</text><rect x="2" y="14" width="23" height="4" fill="#000"/><rect x="6" y="13" width="13" height="1.2" fill="#c01010"/></svg><div class="t" style="left:388.29999999999995px;width:400px;text-align:center;top:162.54px;font-size:12px;font-weight:400;color:#1e1e1e;letter-spacing:-0.467px;">Text</div><svg style="position:absolute;left:744px;top:95px" width="33" height="29" viewBox="0 0 33 29"><defs><radialGradient id="sph" cx="40%" cy="35%" r="65%"><stop offset="0" stop-color="#fff"/><stop offset="0.5" stop-color="#c8a8e8"/><stop offset="1" stop-color="#9a70c8"/></radialGradient></defs>
<path d="M18 1 L30 19 L20 22 Z" fill="#a8d8f0" opacity="0.85"/><path d="M2 3 L10 1 L16 3 L16 12 L8 14 L2 12 Z" fill="#e8a0a8" opacity="0.85"/>
<circle cx="12.5" cy="19" r="7.5" fill="url(#sph)"/></svg><div class="t" style="left:560px;width:400px;text-align:center;top:129.74px;font-size:12px;font-weight:400;color:#b4b4b4;letter-spacing:-0.403px;">Show Shape</div><div class="t" style="left:560px;width:400px;text-align:center;top:143.34px;font-size:12px;font-weight:400;color:#b4b4b4;letter-spacing:0.043px;">Options</div><div style="left:797px;top:91px;width:42px;height:67px;border:1px solid #c8c8c8;background:#fff"></div><div style="left:824px;top:91px;width:1px;height:67px;background:#d0d0d0"></div><div style="left:825px;top:113px;width:14px;height:1px;background:#d0d0d0"></div><div style="left:825px;top:135px;width:14px;height:1px;background:#d0d0d0"></div><svg style="position:absolute;left:802px;top:95px" width="17" height="17" viewBox="0 0 17 17"><rect x="1.5" y="1.5" width="13.5" height="14" rx="1" fill="#bdbdbd" stroke="#2a6ab0" stroke-width="1.8"/></svg><svg style="position:absolute;left:802px;top:118px" width="17" height="17" viewBox="0 0 17 17"><rect x="1.5" y="1.5" width="13.5" height="14" rx="4" fill="#bdbdbd" stroke="#2a6ab0" stroke-width="1.8"/></svg><svg style="position:absolute;left:803px;top:141px" width="14" height="16" viewBox="0 0 14 16"><ellipse cx="7" cy="8.5" rx="5.2" ry="7" fill="#bdbdbd" stroke="#2a6ab0" stroke-width="1.5"/></svg><div style="left:797px;top:156px;width:42px;height:2px;background:#fff"></div><div style="left:797px;top:157px;width:42px;height:1px;background:#c8c8c8"></div><svg style="position:absolute;left:827px;top:98px" width="9" height="6" viewBox="0 0 9 6"><path d="M1 5 L4.5 1.5 L8 5 Z" fill="#c8c8c8"/></svg><svg style="position:absolute;left:827px;top:121px" width="9" height="6" viewBox="0 0 9 6"><path d="M1 1 H8 L4.5 4.5 Z" fill="#333"/></svg><svg style="position:absolute;left:827px;top:143px" width="9" height="8" viewBox="0 0 9 8"><path d="M1 1 H8" stroke="#333" stroke-width="1"/><path d="M1 3 H8 L4.5 6.5 Z" fill="#333"/></svg><svg style="position:absolute;left:843px;top:92px" width="16" height="17" viewBox="0 0 16 17"><g fill="#111"><rect x="1" y="1" width="13" height="1.6"/><rect x="1" y="4" width="13" height="2.2"/><rect x="1" y="7.5" width="13" height="2.6"/><rect x="1" y="11.5" width="13" height="3"/></g></svg><svg style="position:absolute;left:865px;top:100px" width="6" height="3" viewBox="0 0 6 3"><path d="M0 0 H6 L3.0 3 Z" fill="#222"/></svg><div style="left:843px;top:113px;width:40px;height:22px;border:1px solid #c8c8c8;background:#fff"></div><div style="left:847px;top:117px;width:14px;height:13px;background:#000;box-shadow:0 0 1px #888"></div><div style="left:866px;top:115px;width:15px;height:18px;border:1px solid #c4c4c4;background:#ececec"></div><svg style="position:absolute;left:869px;top:121px" width="9" height="6" viewBox="0 0 9 6"><path d="M1 1 L4.5 4.5 L8 1" fill="none" stroke="#666" stroke-width="1.1"/></svg><div style="left:843px;top:136px;width:40px;height:22px;border:1px solid #c8c8c8;background:#fff"></div><div style="left:847px;top:140px;width:14px;height:13px;background:#000;box-shadow:0 0 1px #888"></div><div style="left:866px;top:138px;width:15px;height:18px;border:1px solid #c4c4c4;background:#ececec"></div><svg style="position:absolute;left:869px;top:144px" width="9" height="6" viewBox="0 0 9 6"><path d="M1 1 L4.5 4.5 L8 1" fill="none" stroke="#666" stroke-width="1.1"/></svg><svg style="position:absolute;left:889px;top:92px" width="18" height="18" viewBox="0 0 18 18"><defs><radialGradient id="rb" cx="40%" cy="35%" r="65%"><stop offset="0" stop-color="#ff9090"/><stop offset="0.6" stop-color="#e02020"/><stop offset="1" stop-color="#a00000"/></radialGradient></defs>
<circle cx="11.5" cy="6.5" r="6" fill="url(#rb)"/><rect x="1.5" y="5" width="10" height="10.5" fill="none" stroke="#1a3ab0" stroke-width="2"/></svg><svg style="position:absolute;left:912px;top:100px" width="6" height="3" viewBox="0 0 6 3"><path d="M0 0 H6 L3.0 3 Z" fill="#222"/></svg><div class="t" style="left:623.5px;width:400px;text-align:center;top:162.64px;font-size:12px;font-weight:400;color:#1e1e1e;letter-spacing:-0.113px;">Drawing Tools</div><svg style="position:absolute;left:931px;top:94px" width="32" height="29" viewBox="0 0 32 29"><path d="M6 24 A12 12 0 1 1 24 24" fill="none" stroke="#b8e0b0" stroke-width="4"/><path d="M1 20 L9 21 L5 27 Z" fill="#a8d8a0"/></svg><div class="t" style="left:747px;width:400px;text-align:center;top:129.84px;font-size:12px;font-weight:400;color:#b4b4b4;letter-spacing:-0.349px;">Rotate</div><svg style="position:absolute;left:944px;top:149px" width="6" height="3" viewBox="0 0 6 3"><path d="M0 0 H6 L3.0 3 Z" fill="#c8c8c8"/></svg><svg style="position:absolute;left:982px;top:93px" width="32" height="31" viewBox="0 0 32 31"><rect x="1" y="0.5" width="2" height="29" rx="1" fill="#c8c8c8"/>
<rect x="5" y="2" width="17" height="11" fill="#c8e8c0" stroke="#8cc08c" stroke-width="0.8"/><rect x="13.5" y="15.5" width="13" height="11" fill="#c8e8c0" stroke="#8cc08c" stroke-width="0.8"/>
<path d="M5 21 L10 17 L10 19.5 H13 V22.5 H10 V25 Z" fill="#f8d898"/></svg><div class="t" style="left:798.8px;width:400px;text-align:center;top:129.84px;font-size:12px;font-weight:400;color:#b4b4b4;letter-spacing:0.143px;">Alignment</div><svg style="position:absolute;left:996px;top:149px" width="6" height="3" viewBox="0 0 6 3"><path d="M0 0 H6 L3.0 3 Z" fill="#c8c8c8"/></svg><svg style="position:absolute;left:1039px;top:93px" width="29" height="32" viewBox="0 0 29 32"><rect x="1" y="1" width="21" height="18" rx="1.5" fill="#f4f6f8" stroke="#dde4ea" stroke-width="1"/>
<rect x="4" y="10" width="21" height="18" rx="1.5" fill="#f4f6f8" stroke="#dde4ea" stroke-width="1"/><rect x="4" y="10" width="21" height="3" fill="#e4ecf4"/></svg><div class="t" style="left:854px;width:400px;text-align:center;top:129.84px;font-size:12px;font-weight:400;color:#b4b4b4;letter-spacing:-0.115px;">Arrange</div><svg style="position:absolute;left:1051px;top:149px" width="6" height="3" viewBox="0 0 6 3"><path d="M0 0 H6 L3.0 3 Z" fill="#c8c8c8"/></svg><div class="t" style="left:803px;width:400px;text-align:center;top:162.54px;font-size:12px;font-weight:400;color:#1e1e1e;letter-spacing:0.008px;">Alignment Tools</div><svg style="position:absolute;left:1087px;top:95px" width="32" height="29" viewBox="0 0 32 29"><defs><linearGradient id="pr1087" x1="0" y1="0" x2="0" y2="1"><stop offset="0" stop-color="#777"/><stop offset="1" stop-color="#222"/></linearGradient></defs>
<path d="M12 0.5 L20 1 L19 8 L11.5 8 Z" fill="#555"/><path d="M5 9 Q6 6 12 6 L26 8 Q30 10 30 13 L30 22 L25 24 L8 20 L5 18 Z" fill="url(#pr1087)"/>
<path d="M14 7 L21 8 L20.5 9.5 L13.5 8.5 Z" fill="#eee"/><path d="M22 14 L29 12 L29 21 L22 23 Z" fill="#eaeaea"/><circle cx="24" cy="16" r="0.8" fill="#2233cc"/>
<path d="M1 22 L8 17 L21 20 L14 27 Z" fill="#b8dce8" stroke="#333" stroke-width="1.2"/></svg><div class="t" style="left:903.5999999999999px;width:400px;text-align:center;top:129.44px;font-size:12px;font-weight:400;color:#1e1e1e;letter-spacing:-0.093px;">Print</div><svg style="position:absolute;left:1129px;top:93px" width="10" height="16" viewBox="0 0 10 16"><path d="M1.5 1 L8 1.5 L8.5 14.5 L2 14 Z" fill="#cfe2f4" stroke="#a8c8e8" stroke-width="0.7"/></svg><div class="t" style="left:1145.6px;top:96.04px;font-size:12px;font-weight:400;color:#1e1e1e;letter-spacing:-0.352px;">Show Page Area</div><svg style="position:absolute;left:1125px;top:116px" width="18" height="16" viewBox="0 0 18 16"><rect x="4" y="2" width="7" height="5" fill="#fff" stroke="#4a6aaa" stroke-width="0.9"/><path d="M1 7 H14 V13 H1 Z" fill="#e0e8f4" stroke="#4a6aaa" stroke-width="1"/><rect x="4" y="11" width="7" height="3" fill="#fff" stroke="#4a6aaa" stroke-width="0.8"/>
<circle cx="12.5" cy="5" r="4.5" fill="#5cb82a"/><text x="10.5" y="8" font-family="Liberation Sans" font-size="7" font-weight="bold" fill="#111">?</text></svg><div class="t" style="left:1145.9px;top:118.24px;font-size:12px;font-weight:400;color:#1e1e1e;letter-spacing:-0.037px;">Printer Options</div><svg style="position:absolute;left:1232px;top:124px" width="6" height="3" viewBox="0 0 6 3"><path d="M0 0 H6 L3.0 3 Z" fill="#222"/></svg><div class="t" style="left:1126.6px;top:141.14px;font-size:12px;font-weight:400;color:#1e1e1e;letter-spacing:-0.103px;">Clear Print Options</div><svg style="position:absolute;left:1246px;top:95px" width="32" height="29" viewBox="0 0 32 29"><defs><linearGradient id="pr1246" x1="0" y1="0" x2="0" y2="1"><stop offset="0" stop-color="#777"/><stop offset="1" stop-color="#222"/></linearGradient></defs>
<path d="M12 0.5 L20 1 L19 8 L11.5 8 Z" fill="#555"/><path d="M5 9 Q6 6 12 6 L26 8 Q30 10 30 13 L30 22 L25 24 L8 20 L5 18 Z" fill="url(#pr1246)"/>
<path d="M14 7 L21 8 L20.5 9.5 L13.5 8.5 Z" fill="#eee"/><path d="M22 14 L29 12 L29 21 L22 23 Z" fill="#eaeaea"/><circle cx="24" cy="16" r="0.8" fill="#2233cc"/>
<path d="M1 22 L8 17 L21 20 L14 27 Z" fill="#b8dce8" stroke="#333" stroke-width="1.2"/></svg><div class="t" style="left:1062px;width:400px;text-align:center;top:129.44px;font-size:12px;font-weight:400;color:#1e1e1e;letter-spacing:-0.168px;">Print</div><div class="t" style="left:1062px;width:400px;text-align:center;top:143.34px;font-size:12px;font-weight:400;color:#1e1e1e;letter-spacing:-0.572px;">Labels</div><div class="t" style="left:983.3px;width:400px;text-align:center;top:161.54px;font-size:12px;font-weight:400;color:#1e1e1e;letter-spacing:-0.027px;">Printing</div><svg style="position:absolute;left:1293px;top:94px" width="32" height="30" viewBox="0 0 32 30"><defs><linearGradient id="bk" x1="0" y1="0" x2="1" y2="0"><stop offset="0" stop-color="#b03030"/><stop offset="0.5" stop-color="#8a1a1a"/><stop offset="1" stop-color="#5a0a0a"/></linearGradient></defs>
<path d="M1 5 L13 1 L13 23 L1 27 Z" fill="url(#bk)"/><path d="M13 1 L27 4 L27 27 L13 23 Z" fill="#eef2f4" stroke="#999" stroke-width="0.6"/>
<g stroke="#888" stroke-width="0.7"><path d="M15 7 L25 9"/><path d="M15 10 L25 12"/><path d="M15 13 L25 15"/><path d="M15 16 L25 18"/><path d="M15 19 L25 21"/></g>
<rect x="26" y="6" width="2.5" height="4" fill="#d01010"/><rect x="26" y="11" width="2.5" height="4" fill="#10b010"/><rect x="26" y="16" width="2.5" height="3.5" fill="#f08030"/><rect x="26" y="20" width="3" height="4.5" fill="#1010d0"/></svg><div class="t" style="left:1109px;width:400px;text-align:center;top:129.84px;font-size:12px;font-weight:400;color:#1e1e1e;letter-spacing:-0.299px;">Link To</div><div class="t" style="left:1108.6px;width:400px;text-align:center;top:143.44px;font-size:12px;font-weight:400;color:#1e1e1e;letter-spacing:-0.764px;">BOM</div><svg style="position:absolute;left:1335px;top:94px" width="30" height="31" viewBox="0 0 30 31"><path d="M2 1 L16 2.5 L16 27 L2 25 Z" fill="#eef4f8" stroke="#c8dce8" stroke-width="0.9"/><path d="M6 21 L26 1.5 L28 3.5 L8 23 L5.5 23.5 Z" fill="#f4f4f4" stroke="#d0d0d0" stroke-width="0.8"/></svg><div class="t" style="left:1150.5px;width:400px;text-align:center;top:129.84px;font-size:12px;font-weight:400;color:#b4b4b4;letter-spacing:-0.557px;">Edit</div><svg style="position:absolute;left:1386px;top:93px" width="34" height="32" viewBox="0 0 34 32"><path d="M5 15 C5 2, 16 2, 17 15 C18 28, 29 28, 29 15" fill="none" stroke="#777" stroke-width="1.6"/>
<path d="M4 28 L30 2" stroke="#333" stroke-width="1.3"/>
<g fill="#e0e0e0" stroke="#666" stroke-width="0.9"><rect x="1.5" y="12.5" width="4" height="4"/><rect x="27.5" y="12" width="4" height="4"/><rect x="28" y="0.5" width="4" height="4"/><rect x="2" y="26" width="4" height="4"/></g>
<rect x="14.5" y="12" width="5" height="5" fill="#444" stroke="#222" stroke-width="0.8"/></svg><div class="t" style="left:1203.2px;width:400px;text-align:center;top:129.84px;font-size:12px;font-weight:400;color:#1e1e1e;letter-spacing:-0.539px;">Show</div><div class="t" style="left:1203.2px;width:400px;text-align:center;top:143.44px;font-size:12px;font-weight:400;color:#1e1e1e;letter-spacing:-0.184px;">Connectors</div><div class="t" style="left:1162.7px;width:400px;text-align:center;top:162.54px;font-size:12px;font-weight:400;color:#1e1e1e;letter-spacing:-0.391px;">Misc</div><div style="left:1381px;top:189px;width:18px;height:18px;background:#353535;border:1px solid #2c2c2c"></div><svg style="position:absolute;left:1382px;top:190px" width="16" height="16" viewBox="0 0 16 16"><g fill="none" stroke="#111" stroke-width="1.3"><rect x="5" y="1.5" width="9.5" height="8"/><rect x="3" y="3.5" width="9.5" height="8" fill="#353535"/><rect x="1" y="6" width="10" height="9" fill="#353535"/></g><g fill="#111"><rect x="2.5" y="9" width="3.5" height="1.2"/><rect x="2.5" y="11" width="3.5" height="1.2"/><rect x="2.5" y="13" width="3.5" height="1.2"/><rect x="7" y="9" width="3" height="5"/></g></svg><div style="left:1404px;top:189px;width:18px;height:18px;background:#3a3f48;border:1px solid #1d3d60"></div><svg style="position:absolute;left:1405px;top:190px" width="16" height="16" viewBox="0 0 16 16"><path d="M2.5 3 L9 3.5 L9 15 L2.5 14.5 Z" fill="none" stroke="#222" stroke-width="1"/><path d="M5 12 L14 2.5" stroke="#222" stroke-width="1.3"/></svg><div style="left:310px;top:223px;width:22px;height:22px;background:#1e2835"></div><svg style="position:absolute;left:312px;top:226px" width="10" height="14" viewBox="0 0 10 14"><path d="M1 1 L8 5 L6 12 Z" fill="#0a1030" stroke="#000" stroke-width="0.6"/></svg><svg style="position:absolute;left:312px;top:250px" width="9" height="14" viewBox="0 0 9 14"><path d="M8 1 Q2 2 1 12 L8 12 Z" fill="#4a3025"/></svg><div style="left:318px;top:270px;width:3px;height:1px;background:#555"></div><svg style="position:absolute;left:313px;top:277px" width="8" height="14" viewBox="0 0 8 14"><rect x="1" y="1" width="7" height="12" fill="none" stroke="#1a4a1a" stroke-width="1.4" stroke-dasharray="2 1"/></svg><div style="left:312px;top:299px;width:8px;height:2px;background:#1a4a1a"></div><div style="left:1315px;top:222px;width:18px;height:7px;background:#3e3e3e;border:1px solid #333;border-bottom:none"></div><div style="left:1340px;top:222px;width:18px;height:7px;background:#3e3e3e;border:1px solid #333;border-bottom:none"></div><div style="left:1365px;top:226px;width:14px;height:3px;border:1px solid #0a0a0a;border-bottom:none;background:#3a3a3a"></div><div style="left:1417px;top:224px;width:21px;height:61px;background:#424242"></div><svg style="position:absolute;left:1419px;top:227px" width="16" height="17" viewBox="0 0 16 17"><path d="M3 2 L12 1 L14 4 L14 12 L5 14 L3 11 Z" fill="#1f6a8a"/><path d="M12 8 L14 12 L5 14 L4 11 Z" fill="#a02020" opacity="0.8"/></svg><div class="t" style="left:1417px;top:247px;font-size:12.5px;color:#1e1e1e;transform-origin:0 0;transform:translate(17px,0) rotate(90deg);letter-spacing:-0.1px">Layers</div><svg style="position:absolute;left:1175px;top:931px" width="15" height="16" viewBox="0 0 15 16"><path d="M6 7 V4 A3.5 3.5 0 0 1 13 4 V6" fill="none" stroke="#4a4a4a" stroke-width="1.3"/><rect x="1" y="8" width="9" height="7" fill="#2a2410"/><path d="M1.5 14 L4 9 M4.5 14 L7 9 M7.5 14 L10 9" stroke="#6a5010" stroke-width="1"/></svg><div style="left:1197px;top:931px;width:16px;height:16px;border:1px dashed #3a3a3a"></div><svg style="position:absolute;left:1197px;top:929px" width="18" height="18" viewBox="0 0 18 18"><path d="M8 11 L4.5 15.5" stroke="#4a3818" stroke-width="2.3" stroke-linecap="round"/><ellipse cx="10" cy="8.5" rx="3.8" ry="3.2" fill="#26323c" stroke="#303c46" stroke-width="1"/></svg><svg style="position:absolute;left:1221px;top:929px" width="18" height="18" viewBox="0 0 18 18"><path d="M8 11 L4.5 15.5" stroke="#4a3818" stroke-width="2.3" stroke-linecap="round"/><ellipse cx="10" cy="8.5" rx="3.8" ry="3.2" fill="#26323c" stroke="#303c46" stroke-width="1"/><text x="1.5" y="7.5" font-family="Liberation Sans" font-size="8" font-weight="bold" fill="#505050" letter-spacing="-0.5">100</text></svg><svg style="position:absolute;left:1244px;top:929px" width="18" height="18" viewBox="0 0 18 18"><path d="M8 11 L4.5 15.5" stroke="#4a3818" stroke-width="2.3" stroke-linecap="round"/><ellipse cx="10" cy="8.5" rx="3.8" ry="3.2" fill="#26323c" stroke="#303c46" stroke-width="1"/><text x="1" y="7.5" font-family="Liberation Sans" font-size="8" font-weight="bold" fill="#505050" letter-spacing="-0.5">ALL</text></svg><svg style="position:absolute;left:1266px;top:930px" width="18" height="18" viewBox="0 0 18 18"><path d="M8 11 L11.5 15.5" stroke="#4a3818" stroke-width="2.3" stroke-linecap="round"/><ellipse cx="6" cy="8.5" rx="3.8" ry="3.2" fill="#26323c" stroke="#303c46" stroke-width="1"/><path d="M4 3 H9 M11 3 H16" stroke="#3c3c3c" stroke-width="1.8"/></svg><svg style="position:absolute;left:1289px;top:930px" width="18" height="18" viewBox="0 0 18 18"><path d="M8 11 L11.5 15.5" stroke="#4a3818" stroke-width="2.3" stroke-linecap="round"/><ellipse cx="6" cy="8.5" rx="3.8" ry="3.2" fill="#26323c" stroke="#303c46" stroke-width="1"/><path d="M12 3 H17" stroke="#3c3c3c" stroke-width="1.8"/></svg><div style="left:1313px;top:929px;width:49px;height:20px;background:#383838"></div><div class="t" style="left:1318px;top:933.84px;font-size:12px;font-weight:400;color:#121212;">61%</div><div style="left:1346px;top:930px;width:15px;height:18px;border:1px solid #2a2a2a"></div><svg style="position:absolute;left:1347px;top:931px" width="13" height="16" viewBox="0 0 13 16"><path d="M3 6 L6.5 2.5 L10 6 M3 10 L6.5 13.5 L10 10" fill="none" stroke="#2a2a2a" stroke-width="1.1"/></svg><svg style="position:absolute;left:1370px;top:930px" width="18" height="18" viewBox="0 0 18 18"><path d="M8 11 L11.5 15.5" stroke="#4a3818" stroke-width="2.3" stroke-linecap="round"/><ellipse cx="6" cy="8.5" rx="3.8" ry="3.2" fill="#26323c" stroke="#303c46" stroke-width="1"/><path d="M14 1 V6 M11.5 3.5 H16.5" stroke="#3c3c3c" stroke-width="1.8"/></svg><svg style="position:absolute;left:1393px;top:930px" width="18" height="18" viewBox="0 0 18 18"><path d="M8 11 L11.5 15.5" stroke="#4a3818" stroke-width="2.3" stroke-linecap="round"/><ellipse cx="6" cy="8.5" rx="3.8" ry="3.2" fill="#26323c" stroke="#303c46" stroke-width="1"/><path d="M9 1 V6 M6.5 3.5 H11.5 M15 1 V6 M12.5 3.5 H17.5" stroke="#3c3c3c" stroke-width="1.8"/></svg><div style="left:320px;top:229px;width:1079px;height:681px;background:#c1cdd5;border-right:1px solid #8c8c8c"></div><div style="left:300px;top:303px;width:20px;height:607px;background:#c1cdd5"></div><div class="t" style="left:342.7px;top:251.01px;font-size:17px;font-weight:400;color:#4a4a4a;letter-spacing:-0.532px;">Settings</div><div style="left:1354px;top:251px;width:18px;height:18px;background:#efefef;border:1px solid #a8a8a8"></div><div style="left:333px;top:298px;width:1054px;height:568px;background:#fff;border:1px solid #a8a8a8"></div><div style="left:335px;top:276px;width:91px;height:23px;background:linear-gradient(#f0f0f0,#e4e4e4);border:1px solid #acacac;border-bottom:none"></div><div style="left:425px;top:276px;width:97px;height:23px;background:linear-gradient(#f0f0f0,#e4e4e4);border:1px solid #acacac;border-bottom:none"></div><div style="left:521px;top:274px;width:110px;height:25px;background:#fff;border:1px solid #acacac;border-bottom:none"></div><div class="t" style="left:349.5px;top:281.64px;font-size:12px;font-weight:700;color:#222;letter-spacing:-0.098px;">Instruction</div><div class="t" style="left:434px;top:281.64px;font-size:12px;font-weight:400;color:#222;letter-spacing:-0.041px;">Activity Details</div><div class="t" style="left:529.8px;top:281.64px;font-size:12px;font-weight:400;color:#222;letter-spacing:-0.117px;">Part Assignments</div><div class="t" style="left:343.1px;top:316.14px;font-size:12px;font-weight:400;color:#111;letter-spacing:-0.089px;">Color Assignments by:</div><div style="left:464px;top:310px;width:383px;height:22px;border:1px solid #a8a8a8;background:#fff"></div><div class="t" style="left:469.6px;top:316.14px;font-size:12px;font-weight:400;color:#111;letter-spacing:-0.22px;">Step Settings</div><div style="left:856px;top:310px;width:1px;height:26px;background:#b0b0b0"></div><div class="t" style="left:865.8px;top:313.84px;font-size:12px;font-weight:400;color:#111;letter-spacing:-0.351px;">Sort By:</div><div style="left:910px;top:310px;width:320px;height:18px;border:1px solid #a8a8a8;background:#fff"></div><div class="t" style="left:915px;top:313.84px;font-size:12px;font-weight:400;color:#111;letter-spacing:-0.003px;">Alphanumeric - Part Number</div><div class="t" style="left:1262.8px;top:315.64px;font-size:12px;font-weight:400;color:#111;transform-origin:0 0;transform:scaleX(0.8714);">ASC</div><div class="t" style="left:1306.8px;top:315.64px;font-size:12px;font-weight:400;color:#111;transform-origin:0 0;transform:scaleX(0.8878);">DSC</div><div style="left:1338px;top:310px;width:22px;height:19px;border:1px solid #a8a8a8;background:#fff"></div><div class="t" style="left:348.3px;top:346.8px;font-size:13px;font-weight:400;color:#222;letter-spacing:0.116px;">Custom Color Sorting</div><div style="left:1254px;top:341px;width:30px;height:22px;border:1px solid #999;background:#e8e8e8"></div><div style="left:1288px;top:341px;width:30px;height:22px;border:1px solid #999;background:#e8e8e8"></div><div style="left:1327px;top:341px;width:1px;height:22px;background:#b0b0b0"></div><div style="left:1339px;top:342px;width:22px;height:18px;border:1px solid #999;background:#e8e8e8"></div><div style="left:348px;top:367px;width:1023px;height:483px;border:1px solid #d4d4d4;background:#fff"></div><div class="t" style="left:353.2px;top:373.64px;font-size:12px;font-weight:400;color:#111;letter-spacing:-0.162px;">Color</div><div class="t" style="left:398px;top:373.64px;font-size:12px;font-weight:400;color:#111;letter-spacing:-0.093px;">Line Item</div><div class="t" style="left:498px;top:373.64px;font-size:12px;font-weight:400;color:#111;letter-spacing:-0.055px;">Part Number</div><div class="t" style="left:723px;top:373.64px;font-size:12px;font-weight:400;color:#111;letter-spacing:-0.399px;">References</div><div class="t" style="left:949px;top:373.64px;font-size:12px;font-weight:400;color:#111;letter-spacing:-0.093px;">Description</div><div class="t" style="left:1174px;top:373.64px;font-size:12px;font-weight:400;color:#111;letter-spacing:0.172px;">Footprint</div><div style="left:349px;top:390px;width:1021px;height:1px;background:#d4d4d4"></div><div style="left:349px;top:391px;width:44px;height:20px;background:#efefef"></div><div style="left:394px;top:391px;width:976px;height:20px;background:#dadada"></div><div style="left:349px;top:411px;width:1021px;height:1px;background:#d4d4d4"></div><div style="left:364px;top:394px;width:14px;height:14px;background:#00a651;border:1px solid #000"></div><div class="t" style="left:398px;top:395.84px;font-size:12px;font-weight:400;color:#111;">5</div><div class="t" style="left:498px;top:395.84px;font-size:12px;font-weight:400;color:#111;letter-spacing:-0.139px;">AIS11001 - 1</div><div class="t" style="left:723px;top:395.84px;font-size:12px;font-weight:400;color:#111;letter-spacing:-0.467px;">C6, C11, C11, C35, C35, C37, C37</div><div class="t" style="left:949px;top:395.84px;font-size:12px;font-weight:400;color:#111;letter-spacing:-0.297px;">Capacitor,  X7R Ceramic, 10%, 0603</div><div class="t" style="left:1174px;top:395.84px;font-size:12px;font-weight:400;color:#111;letter-spacing:-0.455px;">SM/C_0603</div><div style="left:349px;top:432px;width:1021px;height:1px;background:#d4d4d4"></div><div style="left:364px;top:415px;width:14px;height:14px;background:#00aeef;border:1px solid #000"></div><div class="t" style="left:398px;top:416.84px;font-size:12px;font-weight:400;color:#111;">2</div><div class="t" style="left:498px;top:416.84px;font-size:12px;font-weight:400;color:#111;letter-spacing:-0.139px;">AIS11002 - 1</div><div class="t" style="left:723px;top:416.84px;font-size:12px;font-weight:400;color:#111;letter-spacing:-0.507px;">C1, C20, C20-C21, C21</div><div class="t" style="left:949px;top:416.84px;font-size:12px;font-weight:400;color:#111;letter-spacing:-0.297px;">Capacitor,  X7R Ceramic, 10%, 0603</div><div class="t" style="left:1174px;top:416.84px;font-size:12px;font-weight:400;color:#111;letter-spacing:-0.455px;">SM/C_0603</div><div style="left:349px;top:453px;width:1021px;height:1px;background:#d4d4d4"></div><div style="left:364px;top:436px;width:14px;height:14px;background:#ec008c;border:1px solid #000"></div><div class="t" style="left:398px;top:437.84px;font-size:12px;font-weight:400;color:#111;">3</div><div class="t" style="left:498px;top:437.84px;font-size:12px;font-weight:400;color:#111;letter-spacing:-0.139px;">AIS11007 - 1</div><div class="t" style="left:723px;top:437.84px;font-size:12px;font-weight:400;color:#111;letter-spacing:-0.525px;">C2, C5, C5, C24, C24-C25, C25</div><div class="t" style="left:949px;top:437.84px;font-size:12px;font-weight:400;color:#111;letter-spacing:-0.297px;">Capacitor,  X5R Ceramic, 10%, 0805</div><div class="t" style="left:1174px;top:437.84px;font-size:12px;font-weight:400;color:#111;letter-spacing:-0.455px;">SM/C_0805</div><div style="left:349px;top:474px;width:1021px;height:1px;background:#d4d4d4"></div><div style="left:364px;top:457px;width:14px;height:14px;background:#f69679;border:1px solid #000"></div><div class="t" style="left:398px;top:458.84px;font-size:12px;font-weight:400;color:#111;">4</div><div class="t" style="left:498px;top:458.84px;font-size:12px;font-weight:400;color:#111;letter-spacing:-0.139px;">AIS11412 - 1</div><div class="t" style="left:723px;top:458.84px;font-size:12px;font-weight:400;color:#111;letter-spacing:-1.577px;">C3</div><div class="t" style="left:949px;top:458.84px;font-size:12px;font-weight:400;color:#111;letter-spacing:-0.324px;">Capacitor, Ceramic 6.8PF 50V C0G 0603</div><div class="t" style="left:1174px;top:458.84px;font-size:12px;font-weight:400;color:#111;letter-spacing:-0.455px;">SM/C_0603</div><div style="left:349px;top:495px;width:1021px;height:1px;background:#d4d4d4"></div><div style="left:364px;top:478px;width:14px;height:14px;background:#3cb878;border:1px solid #000"></div><div class="t" style="left:398px;top:479.84px;font-size:12px;font-weight:400;color:#111;letter-spacing:-0.332px;">22</div><div class="t" style="left:498px;top:479.84px;font-size:12px;font-weight:400;color:#111;letter-spacing:-0.22px;">AIS12006 - 1</div><div class="t" style="left:723px;top:479.84px;font-size:12px;font-weight:400;color:#111;letter-spacing:-1.252px;">L1</div><div class="t" style="left:949px;top:479.84px;font-size:12px;font-weight:400;color:#111;letter-spacing:-0.007px;">Inductor, 0.77A</div><div class="t" style="left:1174px;top:479.84px;font-size:12px;font-weight:400;color:#111;letter-spacing:-0.443px;">SD3114</div><div style="left:349px;top:516px;width:1021px;height:1px;background:#d4d4d4"></div><div style="left:364px;top:499px;width:14px;height:14px;background:#1cbbb4;border:1px solid #000"></div><div class="t" style="left:398px;top:500.84px;font-size:12px;font-weight:400;color:#111;letter-spacing:-0.332px;">43</div><div class="t" style="left:498px;top:500.84px;font-size:12px;font-weight:400;color:#111;letter-spacing:-0.22px;">AIS14024 - 1</div><div class="t" style="left:723px;top:500.84px;font-size:12px;font-weight:400;color:#111;letter-spacing:-0.458px;">TP1, TP19, TP19, TP30, TP30, TP33, TP33</div><div class="t" style="left:949px;top:500.84px;font-size:12px;font-weight:400;color:#111;letter-spacing:0.21px;">Testpoint</div><div class="t" style="left:1174px;top:500.84px;font-size:12px;font-weight:400;color:#111;letter-spacing:-0.9px;">SM_TESTPOINT</div><div style="left:349px;top:537px;width:1021px;height:1px;background:#d4d4d4"></div><div style="left:364px;top:520px;width:14px;height:14px;background:#f06eaa;border:1px solid #000"></div><div class="t" style="left:398px;top:521.84px;font-size:12px;font-weight:400;color:#111;letter-spacing:-0.332px;">37</div><div class="t" style="left:498px;top:521.84px;font-size:12px;font-weight:400;color:#111;letter-spacing:-0.22px;">AIS15001 - 1</div><div class="t" style="left:723px;top:521.84px;font-size:12px;font-weight:400;color:#111;letter-spacing:-0.528px;">R7, R32, R32-R33, R33</div><div class="t" style="left:949px;top:521.84px;font-size:12px;font-weight:400;color:#111;letter-spacing:-0.309px;">Resistor, 0R0, 0603</div><div class="t" style="left:1174px;top:521.84px;font-size:12px;font-weight:400;color:#111;letter-spacing:-0.466px;">SM/R_0603</div><div style="left:349px;top:558px;width:1021px;height:1px;background:#d4d4d4"></div><div style="left:364px;top:541px;width:14px;height:14px;background:#f26522;border:1px solid #000"></div><div class="t" style="left:398px;top:542.84px;font-size:12px;font-weight:400;color:#111;letter-spacing:-0.332px;">29</div><div class="t" style="left:498px;top:542.84px;font-size:12px;font-weight:400;color:#111;letter-spacing:-0.22px;">AIS15002 - 1</div><div class="t" style="left:723px;top:542.84px;font-size:12px;font-weight:400;color:#111;letter-spacing:-1.663px;">R4</div><div class="t" style="left:949px;top:542.84px;font-size:12px;font-weight:400;color:#111;letter-spacing:-0.283px;">Resistor, 1.00R 1%, 0603</div><div class="t" style="left:1174px;top:542.84px;font-size:12px;font-weight:400;color:#111;letter-spacing:-0.466px;">SM/R_0603</div><div style="left:349px;top:579px;width:1021px;height:1px;background:#d4d4d4"></div><div style="left:364px;top:562px;width:14px;height:14px;background:#39b54a;border:1px solid #000"></div><div class="t" style="left:398px;top:563.84px;font-size:12px;font-weight:400;color:#111;letter-spacing:-0.332px;">27</div><div class="t" style="left:498px;top:563.84px;font-size:12px;font-weight:400;color:#111;letter-spacing:-0.22px;">AIS15003 - 1</div><div class="t" style="left:723px;top:563.84px;font-size:12px;font-weight:400;color:#111;letter-spacing:-0.462px;">R1, R11, R11, R16, R16-R17, R17</div><div class="t" style="left:949px;top:563.84px;font-size:12px;font-weight:400;color:#111;letter-spacing:-0.285px;">Resistor, 10R 1%, 0603</div><div class="t" style="left:1174px;top:563.84px;font-size:12px;font-weight:400;color:#111;letter-spacing:-0.466px;">SM/R_0603</div><div style="left:349px;top:600px;width:1021px;height:1px;background:#d4d4d4"></div><div style="left:364px;top:583px;width:14px;height:14px;background:#00aeef;border:1px solid #000"></div><div class="t" style="left:398px;top:584.84px;font-size:12px;font-weight:400;color:#111;letter-spacing:-0.332px;">33</div><div class="t" style="left:498px;top:584.84px;font-size:12px;font-weight:400;color:#111;letter-spacing:-0.22px;">AIS15005 - 1</div><div class="t" style="left:723px;top:584.84px;font-size:12px;font-weight:400;color:#111;letter-spacing:-0.914px;">R10</div><div class="t" style="left:949px;top:584.84px;font-size:12px;font-weight:400;color:#111;letter-spacing:-0.274px;">Resistor, 1.80K 1%, 0603</div><div class="t" style="left:1174px;top:584.84px;font-size:12px;font-weight:400;color:#111;letter-spacing:-0.466px;">SM/R_0603</div><div style="left:349px;top:621px;width:1021px;height:1px;background:#d4d4d4"></div><div style="left:364px;top:604px;width:14px;height:14px;background:#ec008c;border:1px solid #000"></div><div class="t" style="left:398px;top:605.84px;font-size:12px;font-weight:400;color:#111;letter-spacing:-0.332px;">30</div><div class="t" style="left:498px;top:605.84px;font-size:12px;font-weight:400;color:#111;letter-spacing:-0.22px;">AIS15006 - 1</div><div class="t" style="left:723px;top:605.84px;font-size:12px;font-weight:400;color:#111;letter-spacing:-0.628px;">R5, R5-R6, R6</div><div class="t" style="left:949px;top:605.84px;font-size:12px;font-weight:400;color:#111;letter-spacing:-0.274px;">Resistor, 51.0K 1%, 0603</div><div class="t" style="left:1174px;top:605.84px;font-size:12px;font-weight:400;color:#111;letter-spacing:-0.466px;">SM/R_0603</div><div style="left:349px;top:642px;width:1021px;height:1px;background:#d4d4d4"></div><div style="left:364px;top:625px;width:14px;height:14px;background:#aba000;border:1px solid #000"></div><div class="t" style="left:398px;top:626.84px;font-size:12px;font-weight:400;color:#111;letter-spacing:-0.332px;">35</div><div class="t" style="left:498px;top:626.84px;font-size:12px;font-weight:400;color:#111;letter-spacing:-0.22px;">AIS15008 - 1</div><div class="t" style="left:723px;top:626.84px;font-size:12px;font-weight:400;color:#111;letter-spacing:-0.914px;">R23</div><div class="t" style="left:949px;top:626.84px;font-size:12px;font-weight:400;color:#111;letter-spacing:-0.271px;">Resistor, 309K 1%, 0603</div><div class="t" style="left:1174px;top:626.84px;font-size:12px;font-weight:400;color:#111;letter-spacing:-0.466px;">SM/R_0603</div><div style="left:349px;top:663px;width:1021px;height:1px;background:#d4d4d4"></div><div style="left:364px;top:646px;width:14px;height:14px;background:#a0410d;border:1px solid #000"></div><div class="t" style="left:398px;top:647.84px;font-size:12px;font-weight:400;color:#111;letter-spacing:-0.332px;">34</div><div class="t" style="left:498px;top:647.84px;font-size:12px;font-weight:400;color:#111;letter-spacing:-0.22px;">AIS15009 - 1</div><div class="t" style="left:723px;top:647.84px;font-size:12px;font-weight:400;color:#111;letter-spacing:-0.914px;">R22</div><div class="t" style="left:949px;top:647.84px;font-size:12px;font-weight:400;color:#111;letter-spacing:-0.271px;">Resistor, 976K 1%, 0603</div><div class="t" style="left:1174px;top:647.84px;font-size:12px;font-weight:400;color:#111;letter-spacing:-0.466px;">SM/R_0603</div><div style="left:349px;top:684px;width:1021px;height:1px;background:#d4d4d4"></div><div style="left:364px;top:667px;width:14px;height:14px;background:#005b7f;border:1px solid #000"></div><div class="t" style="left:398px;top:668.84px;font-size:12px;font-weight:400;color:#111;letter-spacing:-0.332px;">28</div><div class="t" style="left:498px;top:668.84px;font-size:12px;font-weight:400;color:#111;letter-spacing:-0.139px;">AIS15411 - 1</div><div class="t" style="left:723px;top:668.84px;font-size:12px;font-weight:400;color:#111;letter-spacing:-0.628px;">R2, R2-R3, R3</div><div class="t" style="left:949px;top:668.84px;font-size:12px;font-weight:400;color:#111;letter-spacing:-0.222px;">Resistor, 150 1%, 0603</div><div class="t" style="left:1174px;top:668.84px;font-size:12px;font-weight:400;color:#111;letter-spacing:-0.466px;">SM/R_0603</div><div style="left:349px;top:705px;width:1021px;height:1px;background:#d4d4d4"></div><div style="left:364px;top:688px;width:14px;height:14px;background:#9e0b0f;border:1px solid #000"></div><div class="t" style="left:398px;top:689.84px;font-size:12px;font-weight:400;color:#111;letter-spacing:-0.332px;">46</div><div class="t" style="left:498px;top:689.84px;font-size:12px;font-weight:400;color:#111;letter-spacing:-0.22px;">AIS21010 - 1</div><div class="t" style="left:723px;top:689.84px;font-size:12px;font-weight:400;color:#111;letter-spacing:-0.894px;">U3</div><div class="t" style="left:949px;top:689.84px;font-size:12px;font-weight:400;color:#111;letter-spacing:-0.454px;">OSC 26.000 MHZ 3.3V SMD</div><div class="t" style="left:1174px;top:689.84px;font-size:12px;font-weight:400;color:#111;letter-spacing:-1.08px;">SM_OSC1</div><div style="left:349px;top:726px;width:1021px;height:1px;background:#d4d4d4"></div><div style="left:364px;top:709px;width:14px;height:14px;background:#c7b299;border:1px solid #000"></div><div class="t" style="left:398px;top:710.84px;font-size:12px;font-weight:400;color:#111;letter-spacing:-0.332px;">44</div><div class="t" style="left:498px;top:710.84px;font-size:12px;font-weight:400;color:#111;letter-spacing:-0.22px;">AIS21016 - 1</div><div class="t" style="left:723px;top:710.84px;font-size:12px;font-weight:400;color:#111;letter-spacing:-0.894px;">U1</div><div class="t" style="left:949px;top:710.84px;font-size:12px;font-weight:400;color:#111;letter-spacing:-0.201px;">IC Regulator LDO Micropower 50MA S...</div><div class="t" style="left:1174px;top:710.84px;font-size:12px;font-weight:400;color:#111;letter-spacing:-0.471px;">SOT23-5</div><div style="left:349px;top:747px;width:1021px;height:1px;background:#d4d4d4"></div><div style="left:364px;top:730px;width:14px;height:14px;background:#754c24;border:1px solid #000"></div><div class="t" style="left:398px;top:731.84px;font-size:12px;font-weight:400;color:#111;letter-spacing:-0.332px;">51</div><div class="t" style="left:498px;top:731.84px;font-size:12px;font-weight:400;color:#111;letter-spacing:-0.22px;">AIS21017 - 1</div><div class="t" style="left:723px;top:731.84px;font-size:12px;font-weight:400;color:#111;letter-spacing:-0.53px;">U10</div><div class="t" style="left:949px;top:731.84px;font-size:12px;font-weight:400;color:#111;letter-spacing:-0.394px;">IC Boost Sync ADJ 0.1A SOT23</div><div class="t" style="left:1174px;top:731.84px;font-size:12px;font-weight:400;color:#111;letter-spacing:-0.471px;">SOT23-6</div><div style="left:349px;top:768px;width:1021px;height:1px;background:#d4d4d4"></div><div style="left:364px;top:751px;width:14px;height:14px;background:#00a99d;border:1px solid #000"></div><div class="t" style="left:398px;top:752.84px;font-size:12px;font-weight:400;color:#111;letter-spacing:-0.332px;">47</div><div class="t" style="left:498px;top:752.84px;font-size:12px;font-weight:400;color:#111;letter-spacing:-0.22px;">AIS21018 - 1</div><div class="t" style="left:723px;top:752.84px;font-size:12px;font-weight:400;color:#111;letter-spacing:-0.894px;">U4</div><div class="t" style="left:949px;top:752.84px;font-size:12px;font-weight:400;color:#111;letter-spacing:-0.462px;">IC BUS Trransceiver TRI-ST SOT236</div><div class="t" style="left:1174px;top:752.84px;font-size:12px;font-weight:400;color:#111;letter-spacing:-0.471px;">SOT23-6</div><div style="left:349px;top:789px;width:1021px;height:1px;background:#d4d4d4"></div><div style="left:364px;top:772px;width:14px;height:14px;background:#fbaf5d;border:1px solid #000"></div><div class="t" style="left:398px;top:773.84px;font-size:12px;font-weight:400;color:#111;letter-spacing:-0.332px;">50</div><div class="t" style="left:498px;top:773.84px;font-size:12px;font-weight:400;color:#111;letter-spacing:-0.22px;">AIS21023 - 1</div><div class="t" style="left:723px;top:773.84px;font-size:12px;font-weight:400;color:#111;letter-spacing:-0.894px;">U7</div><div class="t" style="left:949px;top:773.84px;font-size:12px;font-weight:400;color:#111;letter-spacing:-0.225px;">IC Touch Screen Controller 16-TSSO</div><div class="t" style="left:1174px;top:773.84px;font-size:12px;font-weight:400;color:#111;letter-spacing:-0.752px;">TSSOP-16</div><div style="left:393px;top:368px;width:1px;height:421px;background:#d4d4d4"></div><div style="left:493px;top:368px;width:1px;height:421px;background:#d4d4d4"></div><div style="left:718px;top:368px;width:1px;height:421px;background:#d4d4d4"></div><div style="left:944px;top:368px;width:1px;height:421px;background:#d4d4d4"></div><div style="left:1169px;top:368px;width:1px;height:421px;background:#d4d4d4"></div><div style="left:1309px;top:878px;width:75px;height:22px;border:1px solid #888;background:linear-gradient(#f2f2f2,#e4e4e4)"></div><div class="t" style="left:1339px;top:883.74px;font-size:12px;font-weight:400;color:#222;">OK</div><div style="left:1379px;top:910px;width:20px;height:1px;background:#222"></div><svg style="position:absolute;left:1355px;top:252px" width="16" height="16" viewBox="0 0 16 16"><circle cx="8" cy="8" r="6.3" fill="#f4f4f4" stroke="#777" stroke-width="0.9"/><circle cx="8" cy="8" r="4.6" fill="#e8203a"/><path d="M5.8 5.8 L10.2 10.2 M10.2 5.8 L5.8 10.2" stroke="#fff" stroke-width="1.5"/></svg><div style="left:830px;top:312px;width:15px;height:18px;border:1px solid #bdbdbd;background:#ececec"></div><svg style="position:absolute;left:833px;top:318px" width="9" height="6" viewBox="0 0 9 6"><path d="M1 1 L4.5 4.5 L8 1" fill="none" stroke="#555" stroke-width="1.1"/></svg><div style="left:1213px;top:312px;width:15px;height:14px;border:1px solid #bdbdbd;background:#ececec"></div><svg style="position:absolute;left:1216px;top:316px" width="9" height="6" viewBox="0 0 9 6"><path d="M1 1 L4.5 4.5 L8 1" fill="none" stroke="#555" stroke-width="1.1"/></svg><svg style="position:absolute;left:1244px;top:314px" width="14" height="14" viewBox="0 0 14 14"><circle cx="7" cy="7" r="6.2" fill="#fff" stroke="#555" stroke-width="0.9"/><circle cx="7" cy="7" r="3.6" fill="#111"/></svg><svg style="position:absolute;left:1288px;top:314px" width="14" height="14" viewBox="0 0 14 14"><circle cx="7" cy="7" r="6.2" fill="#fff" stroke="#555" stroke-width="0.9"/></svg><svg style="position:absolute;left:1343px;top:316px" width="12" height="6" viewBox="0 0 12 6"><rect x="2" y="2" width="2" height="2" fill="#000"/><rect x="5" y="2" width="2" height="2" fill="#000"/><rect x="8" y="2" width="2" height="2" fill="#000"/></svg><div style="left:1256px;top:343px;width:26px;height:18px;border:1px solid #b8b8b8"></div><div style="left:1290px;top:343px;width:26px;height:18px;border:1px solid #b8b8b8"></div><svg style="position:absolute;left:1262px;top:345px" width="14" height="14" viewBox="0 0 14 14"><defs>
<radialGradient id="gg" cx="40%" cy="35%" r="70%"><stop offset="0" stop-color="#8be08b"/><stop offset="0.6" stop-color="#2faa3a"/><stop offset="1" stop-color="#1a7a25"/></radialGradient>
<radialGradient id="rg" cx="40%" cy="35%" r="70%"><stop offset="0" stop-color="#ff8090"/><stop offset="0.6" stop-color="#e0102a"/><stop offset="1" stop-color="#a00018"/></radialGradient>
<linearGradient id="tan" x1="0" y1="0" x2="1" y2="1"><stop offset="0" stop-color="#f8e070"/><stop offset="1" stop-color="#b87818"/></linearGradient>
</defs><circle cx="7.0" cy="7.0" r="6.4" fill="#f4f4f4" stroke="#7a7a7a" stroke-width="1.1"/><circle cx="7.0" cy="7.0" r="5.18" fill="url(#gg)"/><path d="M7.0 2.8000000000000003 L10.5 7.0 H8.4 V10.85 H5.6000000000000005 V7.0 H3.5 Z" fill="#fff"/></svg><svg style="position:absolute;left:1296px;top:345px" width="14" height="14" viewBox="0 0 14 14"><defs>
<radialGradient id="gg" cx="40%" cy="35%" r="70%"><stop offset="0" stop-color="#8be08b"/><stop offset="0.6" stop-color="#2faa3a"/><stop offset="1" stop-color="#1a7a25"/></radialGradient>
<radialGradient id="rg" cx="40%" cy="35%" r="70%"><stop offset="0" stop-color="#ff8090"/><stop offset="0.6" stop-color="#e0102a"/><stop offset="1" stop-color="#a00018"/></radialGradient>
<linearGradient id="tan" x1="0" y1="0" x2="1" y2="1"><stop offset="0" stop-color="#f8e070"/><stop offset="1" stop-color="#b87818"/></linearGradient>
</defs><circle cx="7.0" cy="7.0" r="6.4" fill="#f4f4f4" stroke="#7a7a7a" stroke-width="1.1"/><circle cx="7.0" cy="7.0" r="5.18" fill="url(#gg)"/><path d="M7.0 11.200000000000001 L10.5 7.0 H8.4 V3.15 H5.6000000000000005 V7.0 H3.5 Z" fill="#fff"/></svg><svg style="position:absolute;left:1343px;top:344px" width="14" height="14" viewBox="0 0 14 14"><defs>
<radialGradient id="gg" cx="40%" cy="35%" r="70%"><stop offset="0" stop-color="#8be08b"/><stop offset="0.6" stop-color="#2faa3a"/><stop offset="1" stop-color="#1a7a25"/></radialGradient>
<radialGradient id="rg" cx="40%" cy="35%" r="70%"><stop offset="0" stop-color="#ff8090"/><stop offset="0.6" stop-color="#e0102a"/><stop offset="1" stop-color="#a00018"/></radialGradient>
<linearGradient id="tan" x1="0" y1="0" x2="1" y2="1"><stop offset="0" stop-color="#f8e070"/><stop offset="1" stop-color="#b87818"/></linearGradient>
</defs><circle cx="7.0" cy="7.0" r="6.4" fill="#f4f4f4" stroke="#7a7a7a" stroke-width="1.1"/><circle cx="7.0" cy="7.0" r="5.18" fill="url(#gg)"/><path d="M7.0 3.15 V10.85 M3.15 7.0 H10.85" stroke="#fff" stroke-width="2.80"/></svg>
</body></html>
